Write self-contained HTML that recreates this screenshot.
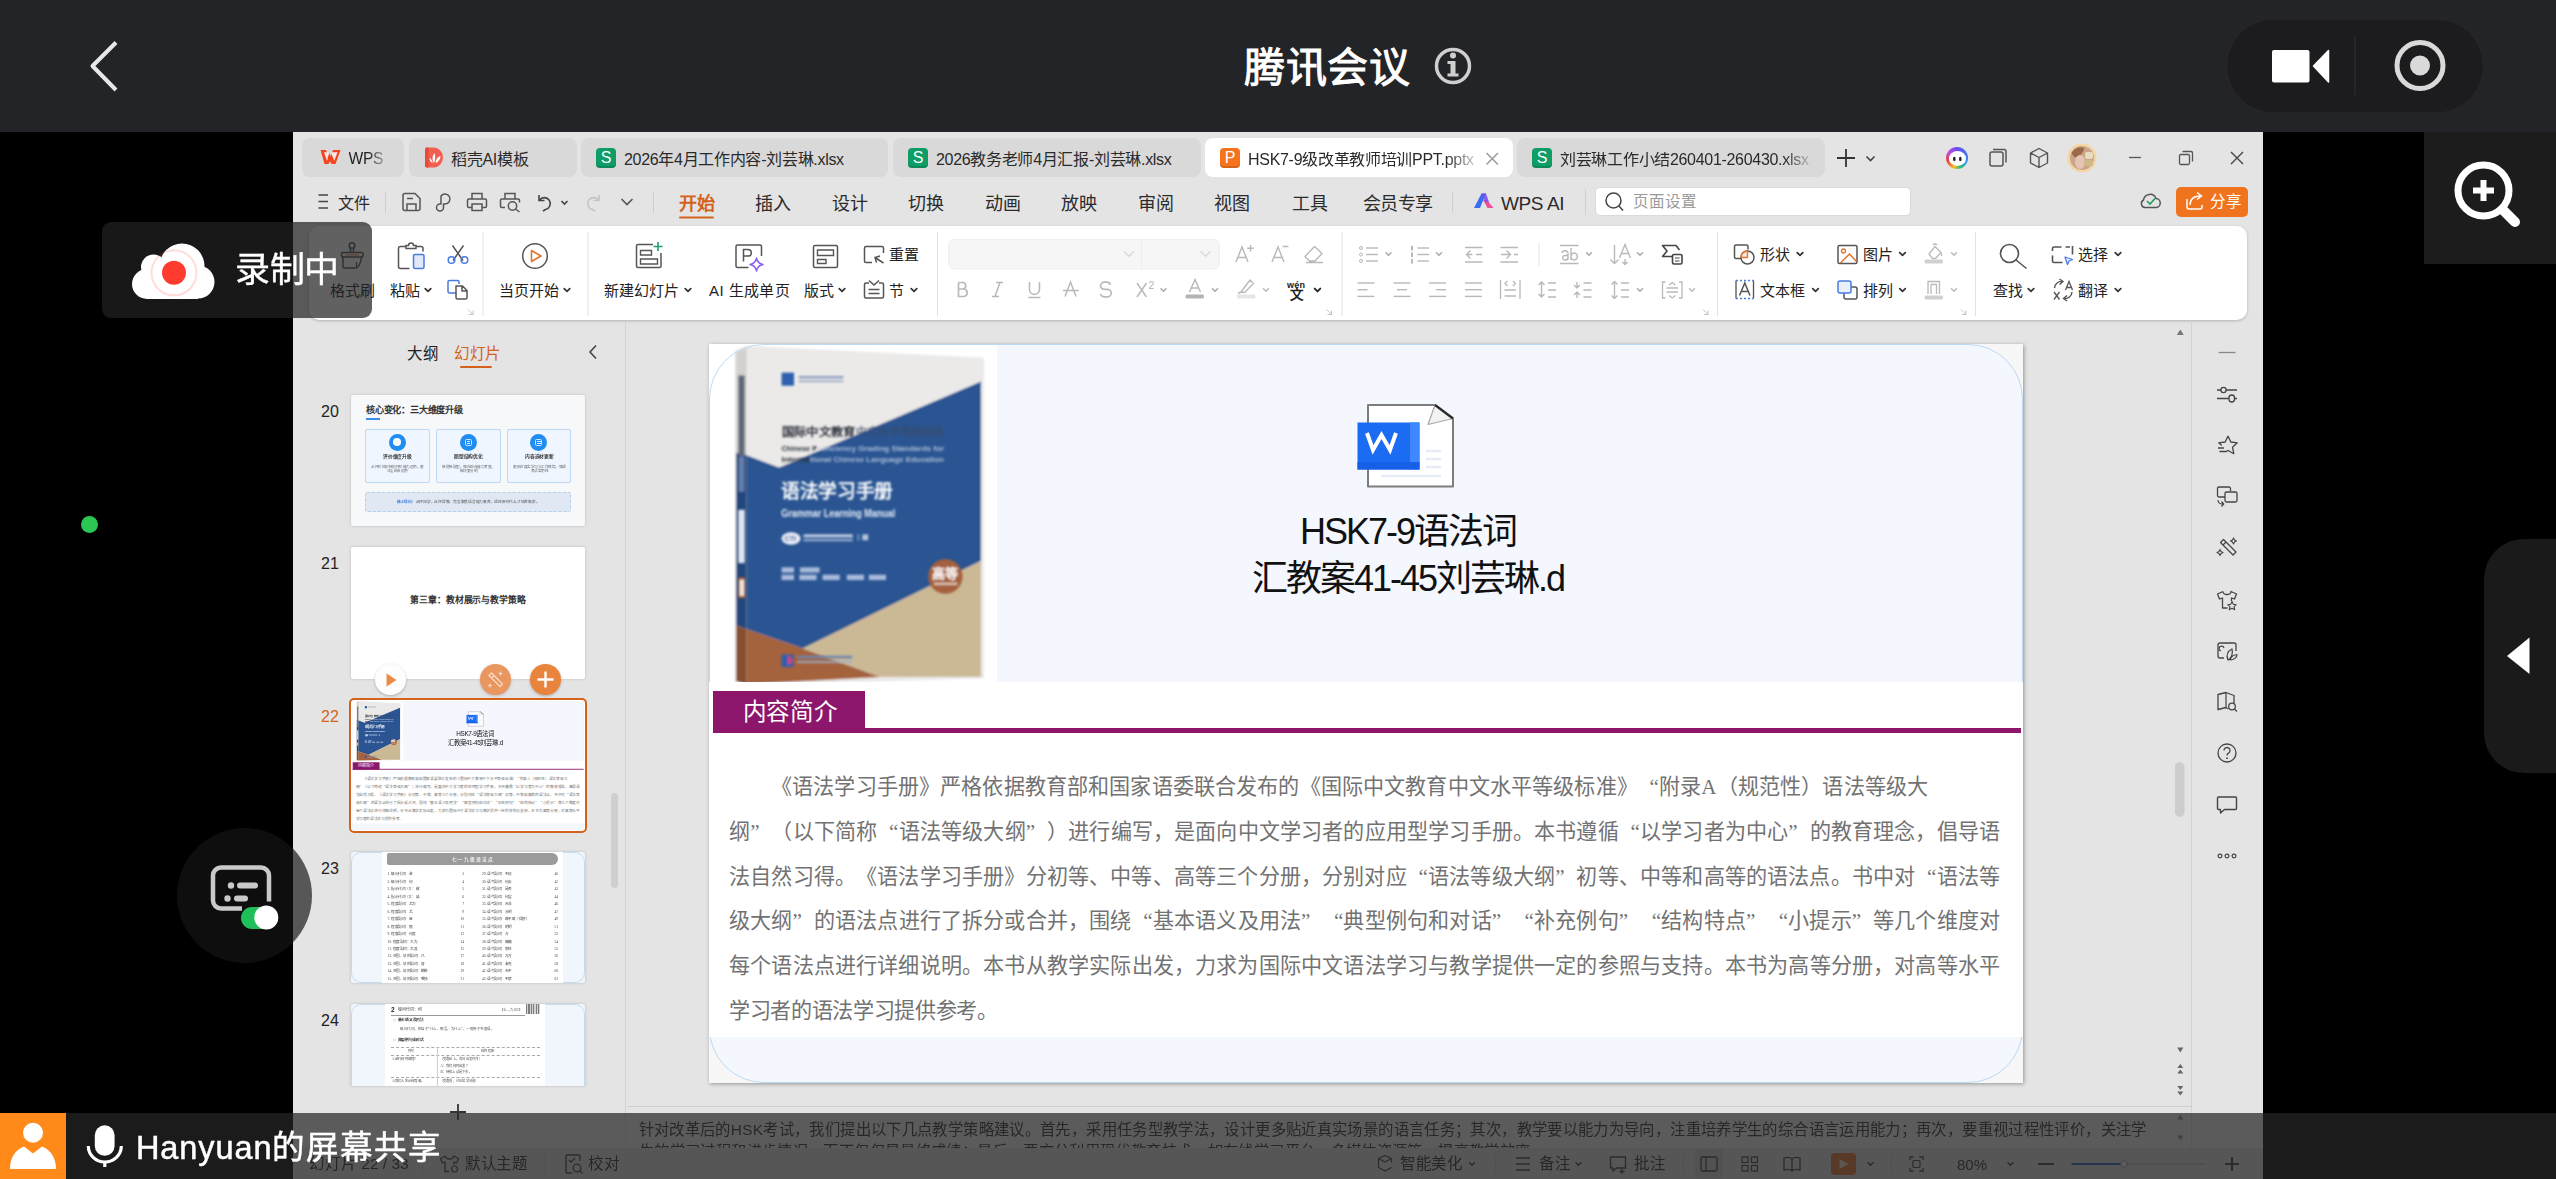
<!DOCTYPE html>
<html lang="zh-CN">
<head>
<meta charset="utf-8">
<title>腾讯会议</title>
<style>
*{box-sizing:border-box;margin:0;padding:0}
html,body{width:2556px;height:1179px;overflow:hidden;background:#000}
body{font-family:"Liberation Sans",sans-serif;position:relative;color:#222}
.abs{position:absolute}
.t{position:absolute;white-space:nowrap;line-height:1}
svg{position:absolute;overflow:visible}
/* top bar */
#topbar{left:0;top:0;width:2556px;height:132px;background:#232427}
/* wps window */
#win{left:293px;top:132px;width:1970px;height:1047px;background:#e4e4e4;overflow:hidden}
.tab{position:absolute;top:6px;height:39px;background:#d9d9d9;border-radius:8px}
.tab .t{top:13.8px;font-size:16px;color:#2a2a2a;letter-spacing:-0.3px}
.ico{position:absolute;top:10px;width:20px;height:20px;border-radius:4px;color:#fff;font-size:16px;font-weight:normal;text-align:center;line-height:19px;box-shadow:inset 0 -2px 0 rgba(0,0,0,.13)}
.menu .t{font-size:18px;color:#2b2b2b;top:62.5px}
.rb .t{font-size:15px;color:#222}
.sep{position:absolute;width:1px;background:#dcdcdc}
.thumb{position:absolute;left:58px;width:234px;background:#fff;box-shadow:0 0 3px rgba(0,0,0,.18);overflow:hidden}
.num{position:absolute;left:28px;font-size:16px;color:#222;line-height:1}
#slide{left:416px;top:212px;width:1314px;height:739px;background:#f7f7f7;box-shadow:1px 1px 4px rgba(0,0,0,.35);overflow:hidden}
.ql{display:inline-block;width:1em;text-align:right;text-align-last:right}.qr{display:inline-block;width:1em;text-align:left;text-align-last:left}
.para.j{text-align:justify;text-align-last:justify;white-space:nowrap;letter-spacing:0}
.para{text-spacing-trim:space-all;position:absolute;left:20px;font-family:"Liberation Serif",serif;font-size:21.1px;color:#727272;white-space:nowrap;line-height:1;letter-spacing:-0.35px}
</style>
</head>
<body>
<!-- ============ TOP BAR ============ -->
<div id="topbar" class="abs">
  <svg width="2556" height="132" viewBox="0 0 2556 132">
    <polyline points="116,42.5 92.500,66 116,90" fill="none" stroke="#e8e8e8" stroke-width="4" stroke-linejoin="round"/>
    <circle cx="1453" cy="66" r="16.5" fill="none" stroke="#cfcfcf" stroke-width="3.5"/>
    <rect x="1450.5" y="61" width="5" height="15" fill="#cfcfcf"/><rect x="1447.5" y="61" width="6" height="3" fill="#cfcfcf"/><rect x="1447.5" y="73.5" width="11" height="3" fill="#cfcfcf"/>
    <circle cx="1453" cy="55.5" r="3" fill="#cfcfcf"/>
    <rect x="2226.500" y="19" width="257" height="94" rx="47" fill="#1c1c1e" stroke="#28282b" stroke-width="1"/>
    <rect x="2272" y="50" width="37.500" height="32.500" rx="2" fill="#fff"/>
    <path d="M2313.500 66 L2328.500 50.500 L2328.500 82 Z" fill="#fff" stroke="#fff" stroke-width="1.500" stroke-linejoin="round"/>
    <rect x="2354.500" y="36" width="1" height="59" fill="#303033"/>
    <circle cx="2420" cy="65.500" r="23" fill="none" stroke="#d9d9d9" stroke-width="5"/>
    <circle cx="2420" cy="65.500" r="10" fill="#d9d9d9"/>
  </svg>
  <div class="t" style="left:1244px;top:47.500px;font-size:41px;color:#fff;font-weight:500;letter-spacing:0.5px;-webkit-text-stroke:1px #fff">腾讯会议</div>
</div>

<!-- ============ WPS WINDOW ============ -->
<div id="win" class="abs">

<!-- tabs -->
<div class="tab" style="left:9px;width:102px"><div class="t" style="left:46.500px;top:13px;font-size:15.600px;color:#222;-webkit-mask-image:linear-gradient(90deg,#000 55%,rgba(0,0,0,.35))">WPS</div></div>
<div class="tab" style="left:116px;width:168px"><div class="t" style="left:42px">稻壳AI模板</div></div>
<div class="tab" style="left:288px;width:307px"><div class="ico" style="left:15px;background:#0e9d67">S</div><div class="t" style="left:43px">2026年4月工作内容-刘芸琳.xlsx</div></div>
<div class="tab" style="left:600px;width:308px"><div class="ico" style="left:15px;background:#0e9d67">S</div><div class="t" style="left:43px">2026教务老师4月汇报-刘芸琳.xlsx</div></div>
<div class="tab" style="left:912px;width:308px;background:#fff"><div class="ico" style="left:15px;background:#f5731d">P</div><div class="t" style="left:43px;width:230px;overflow:hidden;-webkit-mask-image:linear-gradient(90deg,#000 86%,rgba(0,0,0,.15))">HSK7-9级改革教师培训PPT.pptx</div></div>
<div class="tab" style="left:1224px;width:308px"><div class="ico" style="left:15px;background:#0e9d67">S</div><div class="t" style="left:43px;width:249px;overflow:hidden;-webkit-mask-image:linear-gradient(90deg,#000 90%,rgba(0,0,0,.2))">刘芸琳工作小结260401-260430.xlsx</div></div>
<div class="abs" style="left:1653px;top:15px;width:22px;height:22px;border-radius:50%;background:conic-gradient(from 0deg,#6a4cf0,#3a7df0 25%,#2aa5e0 35%,#2fbf71 45%,#f5c023 55%,#f0803c 62%,#e8483c 70%,#c04ae0 85%,#6a4cf0)"></div><div class="abs" style="left:1655.500px;top:19px;width:17.500px;height:15px;border-radius:50%;background:#fff"></div>
<svg width="1970" height="100" viewBox="0 0 1970 100" style="left:0;top:0">
  <!-- wps logo -->
  <path d="M27.500 18 L33 18 L36.500 27 L40 18 L47.500 18 L42.500 32 L38.500 32 L37 28.500 L35.500 32 L31.500 32 Z" fill="#f5441f"/>
  <path d="M31 20.200 L34 28.800 L36.300 23 L35.200 20.200 Z M39 20.200 L44.500 20.200 L41.300 28.800 L38 20.800 Z" fill="#f7e9e4"/><path d="M36.500 21 L38.800 27 L37 31 L34.500 26 Z" fill="#f5441f"/>
  <!-- daoke icon -->
  <path d="M132 17.500 a2 2 0 0 1 2 -2 h7 a9 10 0 0 1 0 20 h-7 a2 2 0 0 1 -2 -2 Z" fill="#f1604f"/>
  <path d="M132 17.500 a2 2 0 0 1 2 -2 h1.500 v20 h-1.500 a2 2 0 0 1 -2 -2 Z" fill="#e8493b"/>
  <path d="M141 31 c-2 -3 -2 -7 0.500 -10 c1 3 1 7 -0.500 10 Z M142.500 31 c0 -3 2 -6 5 -7 c0 3 -2 6 -5 7 Z M139.500 31 c-2 -1 -3 -3 -3 -5 c2 1 3 3 3 5 Z" fill="#fff"/>
  <!-- close x on active tab -->
  <path d="M1193.500 21 L1205 32.500 M1205 21 L1193.500 32.500" stroke="#9a9a9a" stroke-width="1.500" fill="none"/>
  <!-- plus / chevron -->
  <path d="M1544 26 H1562 M1553 17 V35" stroke="#333" stroke-width="1.800" fill="none"/>
  <path d="M1573.500 24.500 L1577.500 28.500 L1581.500 24.500" stroke="#444" stroke-width="1.600" fill="none"/>
  <!-- colorful AI circle -->
  <ellipse cx="1661.300" cy="27" rx="1.300" ry="2.300" fill="#222"/><ellipse cx="1667.300" cy="27" rx="1.300" ry="2.300" fill="#222"/>
  <!-- copy window -->
  <rect x="1697" y="20" width="13" height="14" rx="2" fill="none" stroke="#555" stroke-width="1.500"/>
  <path d="M1700 17.500 h11 a2 2 0 0 1 2 2 v11" fill="none" stroke="#555" stroke-width="1.500"/>
  <!-- cube -->
  <path d="M1746 16.500 L1754.500 21 V31 L1746 35.500 L1737.500 31 V21 Z M1737.500 21 L1746 25.500 L1754.500 21 M1746 25.500 V35.500" fill="none" stroke="#555" stroke-width="1.400" stroke-linejoin="round"/>
  <!-- avatar -->
  <circle cx="1789" cy="26" r="14.500" fill="#f5d5a3"/><circle cx="1789" cy="26" r="12" fill="#c9a58c"/><path d="M1778.500 21 q5 -8 13 -5 q-2 6 -6 9 q-4 2 -7 -4 Z" fill="#9a6a4a"/><ellipse cx="1787" cy="30" rx="5" ry="7" fill="#e6c3b4"/><rect x="1792" y="20" width="8" height="7" rx="2" fill="#e8dcc0"/><rect x="1791" y="28" width="9" height="6" rx="2" fill="#cdb98a"/>
  <!-- min / restore / close -->
  <path d="M1836 25.500 H1848" stroke="#555" stroke-width="1.300"/>
  <rect x="1886.500" y="22.500" width="10" height="10" rx="1.500" fill="none" stroke="#555" stroke-width="1.300"/>
  <path d="M1889.500 19.500 h8.500 a1.500 1.500 0 0 1 1.500 1.500 v8.500" fill="none" stroke="#555" stroke-width="1.300"/>
  <path d="M1938 20 L1950 32 M1950 20 L1938 32" stroke="#444" stroke-width="1.400"/>
  <!-- MENU ROW icons -->
  <path d="M25.500 63 H35 M25.500 69.500 H35 M25.500 76 H35" stroke="#444" stroke-width="1.500"/>
  <rect x="92" y="60" width="1" height="21" fill="#cfcfcf"/>
  <!-- save -->
  <path d="M112 61.500 h10 l5 5 v10 a2 2 0 0 1 -2 2 h-13 a2 2 0 0 1 -2 -2 v-13 a2 2 0 0 1 2 -2 Z" fill="none" stroke="#555" stroke-width="1.500"/>
  <path d="M114 66.500 h6 M114 78 v-6 h9 v6" fill="none" stroke="#555" stroke-width="1.500"/>
  <!-- export/p icon -->
  <path d="M152 72 a5 5 0 1 0 -4 -8 v8 h-1 a3.500 3.500 0 1 0 3.500 3.500 v-3.500 Z" fill="none" stroke="#555" stroke-width="1.500" stroke-linejoin="round"/>
  <!-- print -->
  <path d="M179 67 v-5.500 h10 v5.500 M179 75.500 h-3 a1.500 1.500 0 0 1 -1.500 -1.500 v-5.500 a1.500 1.500 0 0 1 1.500 -1.500 h16 a1.500 1.500 0 0 1 1.500 1.500 v5.500 a1.500 1.500 0 0 1 -1.500 1.500 h-3 M179 72 h10 v6.500 h-10 Z" fill="none" stroke="#555" stroke-width="1.500"/>
  <!-- preview -->
  <path d="M212 67 v-5.500 h10 v5.500 M212 75.500 h-3 a1.500 1.500 0 0 1 -1.500 -1.500 v-5.500 a1.500 1.500 0 0 1 1.500 -1.500 h16 a1.500 1.500 0 0 1 1.500 1.500 v2" fill="none" stroke="#555" stroke-width="1.500"/>
  <circle cx="219.500" cy="74" r="4.200" fill="none" stroke="#555" stroke-width="1.500"/><path d="M222.500 77 L226.500 80" stroke="#555" stroke-width="1.500"/>
  <!-- undo -->
  <path d="M246 63 v5.500 h5.500 M246.500 68 a6 6 0 1 1 6 9.500 l-2.500 1.500" fill="none" stroke="#444" stroke-width="1.600"/>
  <path d="M268.500 69 L271.500 72 L274.500 69" stroke="#444" stroke-width="1.600" fill="none"/>
  <!-- redo (disabled) -->
  <path d="M306 63 v5.500 h-5.500 M305.500 68 a6 6 0 1 0 -6 9.500 l2.500 1.500" fill="none" stroke="#c4c4c4" stroke-width="1.600"/>
  <path d="M328.500 67 L334 72.500 L339.500 67" stroke="#555" stroke-width="1.600" fill="none"/>
  <rect x="360" y="60" width="1" height="21" fill="#cfcfcf"/>
  <rect x="386" y="84.500" width="35" height="2" rx="1" fill="#d4621a"/>
  <rect x="1159" y="60" width="1" height="21" fill="#cfcfcf"/>
  <rect x="1292" y="57" width="1" height="26" fill="#cfcfcf"/>
  <!-- wps ai logo -->
  <path d="M1181 76 L1188.500 61.500 L1193 61.500 L1187 76 Z" fill="#3a6df0"/>
  <path d="M1190 68 L1194 68 L1200.500 76 L1194.500 76 Z" fill="#f0509a"/>
  <path d="M1188.500 61.500 L1193 61.500 L1196 70 L1192 70 Z" fill="#7a4cf0" opacity=".85"/>
</svg>


<!-- menu -->
<div class="menu">
<div class="t" style="left:45px;top:64px;font-size:16px">文件</div>
<div class="t" style="left:386px;top:63px;font-weight:bold;color:#d4621a;letter-spacing:-0.5px">开始</div>
<div class="t" style="left:462px">插入</div>
<div class="t" style="left:539px">设计</div>
<div class="t" style="left:615px">切换</div>
<div class="t" style="left:692px">动画</div>
<div class="t" style="left:768px">放映</div>
<div class="t" style="left:845px">审阅</div>
<div class="t" style="left:921px">视图</div>
<div class="t" style="left:999px">工具</div>
<div class="t" style="left:1070px;letter-spacing:-0.6px">会员专享</div>
<div class="t" style="left:1208px;top:61.500px;font-size:19px;letter-spacing:-0.4px">WPS AI</div>
</div>
<div class="abs" style="left:1302px;top:55px;width:316px;height:29px;background:#fff;border-radius:5px;border:1px solid #dadada"></div>
<svg width="40" height="30" style="left:1305px;top:55px"><circle cx="15.500" cy="13.500" r="7.500" fill="none" stroke="#444" stroke-width="1.500"/><path d="M21 19 L25 23.500" stroke="#444" stroke-width="1.500"/></svg>
<div class="t" style="left:1340px;top:62px;font-size:15.500px;color:#9a9a9a">页面设置</div>
<svg width="30" height="30" style="left:1843px;top:56px"><path d="M9 19.500 h10.500 a4.500 4.500 0 0 0 0.500 -9 a6.500 6.500 0 0 0 -12.500 1.500 a4 4 0 0 0 1.500 7.500 Z" fill="none" stroke="#555" stroke-width="1.500"/><path d="M11 13 L14 16 L19 10.500" fill="none" stroke="#1f9d5a" stroke-width="1.600"/></svg>
<div class="abs" style="left:1883px;top:54.500px;width:72px;height:30px;background:#f0731e;border-radius:5px"></div>
<svg width="30" height="30" style="left:1888px;top:56px"><path d="M6 11 v8 a2 2 0 0 0 2 2 h11 a2 2 0 0 0 2 -2 v-2" fill="none" stroke="#fff" stroke-width="1.500"/><path d="M9 17 c0 -6 4 -9 11 -9 M16 4.500 L20.500 8 L16 11.500" fill="none" stroke="#fff" stroke-width="1.500"/></svg>
<div class="t" style="left:1917px;top:62px;font-size:15.500px;color:#fff">分享</div>


<!-- ribbon -->
<div class="abs" style="left:16px;top:94px;width:1938px;height:94px;background:#fff;border-radius:10px;box-shadow:0 1px 3px rgba(0,0,0,.22)"></div>
<svg width="1970" height="200" viewBox="0 0 1970 200" style="left:0;top:0"><rect x="189.5" y="100" width="1" height="84" fill="#e2e2e2"/><rect x="294.5" y="100" width="1" height="84" fill="#e2e2e2"/><rect x="644.0" y="100" width="1" height="84" fill="#e2e2e2"/><rect x="1048.5" y="100" width="1" height="84" fill="#e2e2e2"/><rect x="1424.0" y="100" width="1" height="84" fill="#e2e2e2"/><rect x="1682.0" y="100" width="1" height="84" fill="#e2e2e2"/><rect x="1245.5" y="111" width="1" height="23" fill="#e2e2e2"/><circle cx="59" cy="113.500" r="2.800" fill="none" stroke="#555" stroke-width="1.500"/><path d="M57.500 116 V120.500 M60.500 116 V120.500" stroke="#555" stroke-width="1.500"/><rect x="48.500" y="120.500" width="21.500" height="4.500" rx="1.500" fill="none" stroke="#555" stroke-width="1.500"/><path d="M52.500 123 H66" stroke="#d9844a" stroke-width="1"/><path d="M50 125 V134.500 a1.500 1.500 0 0 0 1.500 1.500 H62 c3.500 0 6 -5 6.500 -11" fill="none" stroke="#555" stroke-width="1.500"/><path d="M63.500 130 v5" stroke="#555" stroke-width="1.200"/><path d="M113 114.500 h-5.500 a2 2 0 0 0 -2 2 v18 a2 2 0 0 0 2 2 h9 M123 114.500 h5 a2 2 0 0 1 2 2 v3" fill="none" stroke="#555" stroke-width="1.500"/><path d="M113 116.500 v-3 h2.500 a2.500 2.500 0 0 1 5 0 h2.500 v3 Z" fill="none" stroke="#555" stroke-width="1.500"/><rect x="120.500" y="122.500" width="10.500" height="14" rx="1.500" fill="#dfe9fb" stroke="#4a7be0" stroke-width="1.500"/><path d="M132.2 156.6 L135 159.4 L137.8 156.6" stroke="#333" stroke-width="1.7" fill="none" stroke-linecap="round" stroke-linejoin="round"/><path d="M159.500 113.500 L170 128.500 M170.500 113.500 L160 128.500" stroke="#555" stroke-width="1.500" fill="none"/><circle cx="158.500" cy="128" r="3.300" fill="none" stroke="#4a7be0" stroke-width="1.500"/><circle cx="171.500" cy="128" r="3.300" fill="none" stroke="#4a7be0" stroke-width="1.500"/><path d="M163 161 h-6.500 a1.500 1.500 0 0 1 -1.500 -1.500 v-9.500 a1.500 1.500 0 0 1 1.500 -1.500 h8 a1.500 1.500 0 0 1 1.500 1.500 v2" fill="none" stroke="#4a7be0" stroke-width="1.500"/><path d="M163 154 h6.500 l4.500 4.500 v7 a1.500 1.500 0 0 1 -1.500 1.500 h-8 a1.500 1.500 0 0 1 -1.500 -1.500 Z M169 154 v5 h5" fill="#fff" stroke="#555" stroke-width="1.500" stroke-linejoin="round"/><path d="M175.0 177.5 L180.0 182.5 M180.0 178.5 V182.5 H176.0" stroke="#c4c4c4" stroke-width="1" fill="none"/><circle cx="242" cy="124" r="12.300" fill="none" stroke="#555" stroke-width="1.500"/><path d="M238.500 118.500 L248 124 L238.500 129.500 Z" fill="none" stroke="#e0742e" stroke-width="1.600" stroke-linejoin="round"/><path d="M271.2 156.6 L274 159.4 L276.8 156.6" stroke="#333" stroke-width="1.7" fill="none" stroke-linecap="round" stroke-linejoin="round"/><path d="M360 112.500 h-15 a1.500 1.500 0 0 0 -1.500 1.500 v20 a1.500 1.500 0 0 0 1.500 1.500 h21.500 a1.500 1.500 0 0 0 1.500 -1.500 v-13" fill="none" stroke="#555" stroke-width="1.500"/><path d="M347.500 118.500 h11 v4.500 h-11 Z M347.500 127 h17 v5 h-17 Z" fill="none" stroke="#555" stroke-width="1.400"/><path d="M365 110 v9 M360.500 114.500 h9" stroke="#1f9d6b" stroke-width="1.600"/><path d="M392.2 156.6 L395 159.4 L397.8 156.6" stroke="#333" stroke-width="1.7" fill="none" stroke-linecap="round" stroke-linejoin="round"/><path d="M468.500 124 v-9.500 a1.500 1.500 0 0 0 -1.500 -1.500 h-22.500 a1.500 1.500 0 0 0 -1.500 1.500 v19.500 a1.500 1.500 0 0 0 1.500 1.500 h11" fill="none" stroke="#555" stroke-width="1.500"/><path d="M450.500 129.500 v-12 h4.500 a3.300 3.300 0 0 1 0 6.600 h-4.500" fill="none" stroke="#555" stroke-width="1.500"/><path d="M463.500 126 q1 5.500 6.500 6.500 q-5.500 1 -6.500 6.500 q-1 -5.500 -6.500 -6.500 q5.500 -1 6.500 -6.500 Z" fill="#fff" stroke="#8a5cf0" stroke-width="1.400" stroke-linejoin="round"/><rect x="520.500" y="113.500" width="24" height="22" rx="1.500" fill="none" stroke="#555" stroke-width="1.500"/><path d="M524.500 118 h16 v5.500 h-16 Z M524.500 127.500 h8.500 v4 h-8.500 Z" fill="none" stroke="#555" stroke-width="1.400"/><path d="M546.2 156.6 L549 159.4 L551.8 156.6" stroke="#333" stroke-width="1.7" fill="none" stroke-linecap="round" stroke-linejoin="round"/><path d="M579 130.500 h-6 a1.500 1.500 0 0 1 -1.500 -1.500 v-13 a1.500 1.500 0 0 1 1.500 -1.500 h16 a1.500 1.500 0 0 1 1.500 1.500 v5" fill="none" stroke="#555" stroke-width="1.500"/><path d="M590.500 131 L582 125.500 M587 124 L582 125.500 L583.500 130.500" fill="none" stroke="#555" stroke-width="1.500"/><path d="M576 151 h-3 a1.500 1.500 0 0 0 -1.500 1.500 v12 a1.500 1.500 0 0 0 1.500 1.500 h16 a1.500 1.500 0 0 0 1.500 -1.500 v-12 a1.500 1.500 0 0 0 -1.500 -1.500 h-3 M576 148.500 L581 153 L586 148.500 M575.500 157.500 h11 M575.500 161.500 h11" fill="none" stroke="#555" stroke-width="1.500"/><path d="M618.2 156.6 L621 159.4 L623.8 156.6" stroke="#333" stroke-width="1.7" fill="none" stroke-linecap="round" stroke-linejoin="round"/><rect x="655.500" y="107.500" width="271" height="29.500" rx="6" fill="#f6f6f6" stroke="#efefef" stroke-width="1"/><rect x="848" y="108" width="1" height="28.500" fill="#ececec"/><path d="M831.5 119.75 L836 124.25 L840.5 119.75" stroke="#d9d9d9" stroke-width="1.4" fill="none" stroke-linecap="round" stroke-linejoin="round"/><path d="M908.0 119.75 L912.5 124.25 L917.0 119.75" stroke="#d9d9d9" stroke-width="1.4" fill="none" stroke-linecap="round" stroke-linejoin="round"/><path d="M943 130 L949 115 L955 130 M945 125.500 h8 M957.500 113 v6.500 M954.200 116.200 h6.600" fill="none" stroke="#b9b9b9" stroke-width="1.400"/><path d="M979 130 L985 115 L991 130 M981 125.500 h8 M989.500 114.500 h6" fill="none" stroke="#b9b9b9" stroke-width="1.400"/><path d="M1012 124.500 L1021.500 114.500 L1029 121.500 L1022 129 h-5.500 Z M1013 130.500 h17" fill="none" stroke="#b9b9b9" stroke-width="1.400" stroke-linejoin="round"/><path d="M665.500 150.500 v14 h5.500 a3.800 3.800 0 0 0 0 -7.500 h-5.500 M665.500 157 h4.500 a3.300 3.300 0 0 0 0 -6.500 h-4.500" fill="none" stroke="#b9b9b9" stroke-width="1.700"/><path d="M703 150.500 h7 M699 164.500 h7 M707 150.500 L702 164.500" fill="none" stroke="#b9b9b9" stroke-width="1.500"/><path d="M736.500 150 v7.500 a5 5 0 0 0 10 0 v-7.500 M735.500 165.500 h12" fill="none" stroke="#b9b9b9" stroke-width="1.500"/><path d="M772 164.500 L777.500 150 L783 164.500 M770 158.500 h15.500" fill="none" stroke="#b9b9b9" stroke-width="1.500"/><path d="M817.500 153 a4.500 3.300 0 0 0 -4.500 -2.800 h-1.500 a3.800 3.500 0 0 0 0 7.200 h3 a3.800 3.700 0 0 1 0 7.400 h-2 a4.800 3.500 0 0 1 -5 -3" fill="none" stroke="#b9b9b9" stroke-width="1.700"/><path d="M844 151 L853.500 165 M853.500 151 L844 165" stroke="#b9b9b9" stroke-width="1.500" fill="none"/><path d="M856.500 151.500 a2 2 0 0 1 4 0 c0 1.500 -4 3 -4 5 h4.200" stroke="#b9b9b9" stroke-width="1.100" fill="none"/><path d="M868.0 156.75 L870.5 159.25 L873.0 156.75" stroke="#aaa" stroke-width="1.5" fill="none" stroke-linecap="round" stroke-linejoin="round"/><path d="M896.500 160 L902 147.500 L907.500 160 M898.500 156 h7" fill="none" stroke="#b9b9b9" stroke-width="1.500"/><rect x="892.500" y="162.500" width="18.500" height="4" rx="1.500" fill="#b4b4b4"/><path d="M919.5 156.75 L922 159.25 L924.5 156.75" stroke="#aaa" stroke-width="1.5" fill="none" stroke-linecap="round" stroke-linejoin="round"/><path d="M948 160 L957 148 L960.500 151.500 L951.500 160.500 Z M945 161.500 l3 -1.500" fill="none" stroke="#b9b9b9" stroke-width="1.400" stroke-linejoin="round"/><rect x="944" y="162.500" width="18.500" height="4" rx="1.500" fill="#e6e6e6"/><path d="M970.5 156.75 L973 159.25 L975.5 156.75" stroke="#bbb" stroke-width="1.5" fill="none" stroke-linecap="round" stroke-linejoin="round"/><path d="M1021.7 156.6 L1024.5 159.4 L1027.3 156.6" stroke="#222" stroke-width="1.9" fill="none" stroke-linecap="round" stroke-linejoin="round"/><path d="M1033.5 177.5 L1038.5 182.5 M1038.5 178.5 V182.5 H1034.5" stroke="#c4c4c4" stroke-width="1" fill="none"/><circle cx="1068" cy="116" r="1.500" fill="none" stroke="#b9b9b9" stroke-width="1"/><path d="M1073 116 h12" stroke="#b9b9b9" stroke-width="1.400"/><path d="M1124.500 116 h11.500" stroke="#b9b9b9" stroke-width="1.400"/><rect x="1118" y="114" width="2" height="4.500" fill="#b9b9b9"/><circle cx="1068" cy="122.5" r="1.500" fill="none" stroke="#b9b9b9" stroke-width="1"/><path d="M1073 122.5 h12" stroke="#b9b9b9" stroke-width="1.400"/><path d="M1124.500 122.5 h11.500" stroke="#b9b9b9" stroke-width="1.400"/><rect x="1118" y="120.5" width="2" height="4.500" fill="#b9b9b9"/><circle cx="1068" cy="129" r="1.500" fill="none" stroke="#b9b9b9" stroke-width="1"/><path d="M1073 129 h12" stroke="#b9b9b9" stroke-width="1.400"/><path d="M1124.500 129 h11.500" stroke="#b9b9b9" stroke-width="1.400"/><rect x="1118" y="127" width="2" height="4.500" fill="#b9b9b9"/><path d="M1093.0 120.75 L1095.5 123.25 L1098.0 120.75" stroke="#aaa" stroke-width="1.5" fill="none" stroke-linecap="round" stroke-linejoin="round"/><path d="M1143.5 120.75 L1146 123.25 L1148.5 120.75" stroke="#aaa" stroke-width="1.5" fill="none" stroke-linecap="round" stroke-linejoin="round"/><path d="M1172 115.500 h17.500 M1172 130 h17.500 M1173.500 122.500 h6 M1183 122.500 h6 M1177.500 118.500 L1173.500 122.500 L1177.500 126.500" fill="none" stroke="#b9b9b9" stroke-width="1.400"/><path d="M1207.500 115.500 h17.500 M1207.500 130 h17.500 M1208 122.500 h9.500 M1221 122.500 h4 M1213.500 118.500 L1217.500 122.500 L1213.500 126.500" fill="none" stroke="#b9b9b9" stroke-width="1.400"/><path d="M1267 113.500 h18.500 M1267 131.500 h18.500" stroke="#b9b9b9" stroke-width="1.300"/><path d="M1275 127.500 v-6 a3 2.500 0 0 0 -6 -0.500 M1275 123.500 h-3.500 a2.300 2.300 0 0 0 0 4.500 h1 a2.500 2.500 0 0 0 2.500 -2.500 M1278 116 v12 M1278 124 a3.200 3.500 0 1 1 0 1" fill="none" stroke="#b9b9b9" stroke-width="1.400"/><path d="M1293.5 120.75 L1296 123.25 L1298.5 120.75" stroke="#aaa" stroke-width="1.5" fill="none" stroke-linecap="round" stroke-linejoin="round"/><path d="M1321.500 113 v18.500 M1317.500 127.500 L1321.500 131.500 L1325.500 127.500 M1326.500 126 L1332 112.500 L1337.500 126 M1328.500 121.500 h7 M1332 127 v5 M1329.500 130 L1332 132.500 L1334.500 130" fill="none" stroke="#b9b9b9" stroke-width="1.400"/><path d="M1344.5 120.75 L1347 123.25 L1349.5 120.75" stroke="#aaa" stroke-width="1.5" fill="none" stroke-linecap="round" stroke-linejoin="round"/><path d="M1379 124.500 h-9.500 l4.500 -5.500 l-4.500 -5.500 h13.500 l3.500 4.500" fill="none" stroke="#444" stroke-width="1.600" stroke-linejoin="round"/><rect x="1379.500" y="122.500" width="9.500" height="9.500" rx="1.500" fill="#fff" stroke="#444" stroke-width="1.600"/><path d="M1382 126 h4.500 M1382 129 h4.500" stroke="#444" stroke-width="1.200"/><path d="M1064.5 151.0 h17" stroke="#b9b9b9" stroke-width="1.400"/><path d="M1064.5 157.7 h10" stroke="#b9b9b9" stroke-width="1.400"/><path d="M1064.5 164.4 h17" stroke="#b9b9b9" stroke-width="1.400"/><path d="M1100.5 151.0 h17" stroke="#b9b9b9" stroke-width="1.400"/><path d="M1104.0 157.7 h10" stroke="#b9b9b9" stroke-width="1.400"/><path d="M1100.5 164.4 h17" stroke="#b9b9b9" stroke-width="1.400"/><path d="M1136 151.0 h17" stroke="#b9b9b9" stroke-width="1.400"/><path d="M1143 157.7 h10" stroke="#b9b9b9" stroke-width="1.400"/><path d="M1136 164.4 h17" stroke="#b9b9b9" stroke-width="1.400"/><path d="M1172 151.0 h17" stroke="#b9b9b9" stroke-width="1.400"/><path d="M1172 157.7 h17" stroke="#b9b9b9" stroke-width="1.400"/><path d="M1172 164.4 h17" stroke="#b9b9b9" stroke-width="1.400"/><path d="M1207.500 148 v19 M1227 148 v19 M1211.500 158 h11.500 M1211.500 164 h11.500 M1214.500 149 l-2.500 2.500 l2.500 2.500 M1220 149 l2.500 2.500 l-2.500 2.500" fill="none" stroke="#b9b9b9" stroke-width="1.300"/><path d="M1248.500 150 v15 M1245.500 153 L1248.500 150 L1251.500 153 M1245.500 162 L1248.500 165 L1251.500 162 M1255 151 h8 M1255 158 h8 M1255 165 h8" fill="none" stroke="#b9b9b9" stroke-width="1.400"/><path d="M1284 150 v6 M1281 153 L1284 156 L1287 153 M1284 166 v-6 M1281 163 L1284 160 L1287 163 M1290.500 151 h8 M1290.500 158 h8 M1290.500 165 h8" fill="none" stroke="#b9b9b9" stroke-width="1.400"/><path d="M1321.500 149.500 v17 M1318.500 152.500 L1321.500 149.500 L1324.500 152.500 M1318.500 163.500 L1321.500 166.500 L1324.500 163.500 M1328 151 h8 M1328 158 h8 M1328 165 h8" fill="none" stroke="#b9b9b9" stroke-width="1.400"/><path d="M1344.5 156.75 L1347 159.25 L1349.5 156.75" stroke="#aaa" stroke-width="1.5" fill="none" stroke-linecap="round" stroke-linejoin="round"/><path d="M1372.500 150 h-3 v16 h3 M1386 150 h3 v16 h-3 M1373.500 156 h11.500 M1373.500 160 h11.500 M1376 153 l3.200 -2.500 l3.200 2.500 M1376 163.500 l3.200 2.500 l3.200 -2.500" fill="none" stroke="#b9b9b9" stroke-width="1.300"/><path d="M1396.5 156.75 L1399 159.25 L1401.5 156.75" stroke="#bbb" stroke-width="1.5" fill="none" stroke-linecap="round" stroke-linejoin="round"/><path d="M1410.0 177.5 L1415.0 182.5 M1415.0 178.5 V182.5 H1411.0" stroke="#c4c4c4" stroke-width="1" fill="none"/><path d="M1449 126.500 h-6 a1.500 1.500 0 0 1 -1.500 -1.500 v-10.500 a1.500 1.500 0 0 1 1.500 -1.500 h10.500 a1.500 1.500 0 0 1 1.500 1.500 v3" fill="none" stroke="#555" stroke-width="1.500"/><circle cx="1454.500" cy="125.500" r="6.500" fill="#fff" stroke="#555" stroke-width="1.500"/><path d="M1454.500 125.500 v-6.500 a6.500 6.500 0 0 0 -6.500 6.500 Z" fill="#fbe6d8" stroke="#e0742e" stroke-width="1.400" stroke-linejoin="round"/><path d="M1504.2 120.6 L1507 123.4 L1509.8 120.6" stroke="#333" stroke-width="1.7" fill="none" stroke-linecap="round" stroke-linejoin="round"/><path d="M1443 148.500 v18 M1460.500 148.500 v18" stroke="#555" stroke-width="1.300"/><path d="M1443 148.500 h17.500 M1443 166.500 h17.500" stroke="#4a7be0" stroke-width="1.300" stroke-dasharray="2 2"/><path d="M1446.500 163.500 L1451.800 151 L1457 163.500 M1448.500 159.500 h6.500" fill="none" stroke="#555" stroke-width="1.500"/><path d="M1519.7 156.6 L1522.5 159.4 L1525.3 156.6" stroke="#333" stroke-width="1.7" fill="none" stroke-linecap="round" stroke-linejoin="round"/><rect x="1545" y="113.500" width="19" height="18" rx="1.500" fill="none" stroke="#555" stroke-width="1.500"/><circle cx="1550.500" cy="119" r="2" fill="none" stroke="#e0742e" stroke-width="1.300"/><path d="M1547.500 131 L1556.500 122 L1563.500 129.500" fill="none" stroke="#e0742e" stroke-width="1.500"/><path d="M1606.7 120.6 L1609.5 123.4 L1612.3 120.6" stroke="#333" stroke-width="1.7" fill="none" stroke-linecap="round" stroke-linejoin="round"/><rect x="1551" y="155" width="13" height="12" rx="2" fill="#fff" stroke="#555" stroke-width="1.500"/><rect x="1545" y="149" width="13" height="12" rx="2" fill="#eaf0fd" stroke="#4a7be0" stroke-width="1.500"/><path d="M1551 161 v-0 " stroke="#555"/><path d="M1606.7 156.6 L1609.5 159.4 L1612.3 156.6" stroke="#333" stroke-width="1.7" fill="none" stroke-linecap="round" stroke-linejoin="round"/><path d="M1636 122 L1642 114.500 L1648 120.500 L1642.500 126.500 h-3 Z M1640 113 a2.500 2.500 0 0 1 4 0 M1648.500 121 v3" fill="none" stroke="#b9b9b9" stroke-width="1.300" stroke-linejoin="round"/><rect x="1631.500" y="127.500" width="18.500" height="4" rx="1.500" fill="#d0d0d0"/><path d="M1658.5 120.75 L1661 123.25 L1663.5 120.75" stroke="#bbb" stroke-width="1.5" fill="none" stroke-linecap="round" stroke-linejoin="round"/><path d="M1635 162 v-12.500 h11.500 v12.500 M1638 162 v-9.500 h5.500 v9.500" fill="none" stroke="#b9b9b9" stroke-width="1.300"/><rect x="1631.500" y="163.500" width="18.500" height="4" rx="1.500" fill="#d0d0d0"/><path d="M1658.5 156.75 L1661 159.25 L1663.5 156.75" stroke="#bbb" stroke-width="1.5" fill="none" stroke-linecap="round" stroke-linejoin="round"/><path d="M1668.0 177.5 L1673.0 182.5 M1673.0 178.5 V182.5 H1669.0" stroke="#c4c4c4" stroke-width="1" fill="none"/><circle cx="1716.500" cy="121.500" r="9" fill="none" stroke="#555" stroke-width="1.600"/><path d="M1723 128 L1733.500 136.500" stroke="#555" stroke-width="1.600"/><path d="M1735.2 156.6 L1738 159.4 L1740.8 156.6" stroke="#333" stroke-width="1.7" fill="none" stroke-linecap="round" stroke-linejoin="round"/><path d="M1768.500 115 h-7.500 a1.500 1.500 0 0 0 -1.500 1.500 v2.500 M1772.500 115 h4.500 M1759.500 123.500 v5.500 a1.500 1.500 0 0 0 1.500 1.500 h8.500 M1779.500 114 v8.500" fill="none" stroke="#555" stroke-width="1.600"/><path d="M1772 125 L1779.500 127.500 L1776 129 L1774.500 132.500 Z" fill="#eaf0fd" stroke="#4a7be0" stroke-width="1.300" stroke-linejoin="round"/><path d="M1822.2 120.6 L1825 123.4 L1827.8 120.6" stroke="#333" stroke-width="1.7" fill="none" stroke-linecap="round" stroke-linejoin="round"/><path d="M1761.500 156 a7 7 0 0 1 8 -6.500 M1766.500 147 L1770 149.500 L1766.500 152.500 M1779 160 a7 7 0 0 1 -8 6.500 M1774 169 L1770.500 166.500 L1774 163.500" fill="none" stroke="#555" stroke-width="1.400"/><path d="M1772.500 158 L1776 149.500 L1779.500 158 M1773.800 155.500 h4.500 M1761 160 L1766.500 167.500 M1766.500 160 L1761 167.500" fill="none" stroke="#555" stroke-width="1.300"/><path d="M1822.2 156.6 L1825 159.4 L1827.8 156.6" stroke="#333" stroke-width="1.7" fill="none" stroke-linecap="round" stroke-linejoin="round"/></svg>
<div class="rb"><div class="t" style="left:37px;top:151px">格式刷</div><div class="t" style="left:97px;top:151px">粘贴</div><div class="t" style="left:206px;top:151px">当页开始</div><div class="t" style="left:311px;top:151px">新建幻灯片</div><div class="t" style="left:416px;top:151px;letter-spacing:0.4px">AI 生成单页</div><div class="t" style="left:511px;top:151px">版式</div><div class="t" style="left:596px;top:115px">重置</div><div class="t" style="left:596px;top:151px">节</div><div class="t" style="left:1467px;top:115px">形状</div><div class="t" style="left:1467px;top:151px">文本框</div><div class="t" style="left:1570px;top:115px">图片</div><div class="t" style="left:1570px;top:151px">排列</div><div class="t" style="left:1699.5px;top:151px">查找</div><div class="t" style="left:1785px;top:115px">选择</div><div class="t" style="left:1785px;top:151px">翻译</div><div class="t" style="left:994px;top:149px;font-size:9px;color:#222;font-weight:bold;letter-spacing:0.3px">wén</div><div class="t" style="left:997px;top:156px;font-size:13.500px;color:#222;font-weight:bold">文</div></div>


<!-- left panel -->
<div class="t" style="left:114px;top:213.500px;font-size:15.500px;color:#222">大纲</div>
<div class="t" style="left:161px;top:213.500px;font-size:15.500px;color:#d4621a;letter-spacing:-0.3px">幻灯片</div>
<div class="abs" style="left:167px;top:234px;width:32px;height:2px;background:#d4621a;border-radius:1px"></div>
<svg width="20" height="20" style="left:290px;top:210px"><path d="M13 3.500 L7 10 L13 16.500" fill="none" stroke="#444" stroke-width="1.600"/></svg>
<div class="num" style="top:271.6px;color:#222">20</div>
<div class="num" style="top:423.6px;color:#222">21</div>
<div class="num" style="top:576.6px;color:#d4621a">22</div>
<div class="num" style="top:728.6px;color:#222">23</div>
<div class="num" style="top:880.6px;color:#222">24</div>
<div class="thumb" style="top:263px;height:131px;background:#f7f8fa;border-radius:2px"><div class="t" style="left:15px;top:11px;font-size:9.200px;font-weight:bold;color:#333;letter-spacing:-0.2px">核心变化：三大维度升级</div><div class="abs" style="left:15px;top:23px;width:14px;height:1.500px;background:#3a8ee6"></div><div class="abs" style="left:14px;top:34px;width:64.500px;height:54px;background:#eff6ff;border:1px solid #bdd9f6;border-radius:2px"></div><div class="abs" style="left:37.75px;top:38.500px;width:17px;height:17px;border-radius:50%;background:#1f8df2"></div><div class="abs" style="left:42.25px;top:43px;width:8px;height:8px;border-radius:50%;background:#fff"></div><div class="abs" style="left:14px;top:57px;width:258px;height:120px;transform:scale(.25);transform-origin:0 0"><div class="t" style="left:0;width:258px;text-align:center;top:8px;font-size:19px;font-weight:bold;color:#333">评价维度升级</div><div class="t" style="left:0;width:258px;text-align:center;top:50px;font-size:14.500px;color:#666">从评价知识转向评价能力运用，更</div><div class="t" style="left:0;width:258px;text-align:center;top:69px;font-size:14.500px;color:#666">注重综合运用</div></div><div class="abs" style="left:85px;top:34px;width:64.500px;height:54px;background:#eff6ff;border:1px solid #bdd9f6;border-radius:2px"></div><div class="abs" style="left:108.75px;top:38.500px;width:17px;height:17px;border-radius:50%;background:#1f8df2"></div><div class="abs" style="left:113.75px;top:43.500px;width:7px;height:7.500px;border-radius:1.500px;border:1px solid #d9ecff;opacity:.9"></div><div class="abs" style="left:115.75px;top:46px;width:3.500px;height:1px;background:#d9ecff"></div><div class="abs" style="left:115.75px;top:48px;width:3.500px;height:1px;background:#d9ecff"></div><div class="abs" style="left:85px;top:57px;width:258px;height:120px;transform:scale(.25);transform-origin:0 0"><div class="t" style="left:0;width:258px;text-align:center;top:8px;font-size:19px;font-weight:bold;color:#333">题型结构优化</div><div class="t" style="left:0;width:258px;text-align:center;top:50px;font-size:14.500px;color:#666">新增新题型，强化综合能力考查，</div><div class="t" style="left:0;width:258px;text-align:center;top:69px;font-size:14.500px;color:#666">板块更分明</div></div><div class="abs" style="left:155.5px;top:34px;width:64.500px;height:54px;background:#eff6ff;border:1px solid #bdd9f6;border-radius:2px"></div><div class="abs" style="left:179.25px;top:38.500px;width:17px;height:17px;border-radius:50%;background:#1f8df2"></div><div class="abs" style="left:184.25px;top:43.500px;width:7px;height:7.500px;border-radius:1.500px;border:1px solid #d9ecff;opacity:.9"></div><div class="abs" style="left:186.25px;top:46px;width:3.500px;height:1px;background:#d9ecff"></div><div class="abs" style="left:186.25px;top:48px;width:3.500px;height:1px;background:#d9ecff"></div><div class="abs" style="left:155.5px;top:57px;width:258px;height:120px;transform:scale(.25);transform-origin:0 0"><div class="t" style="left:0;width:258px;text-align:center;top:8px;font-size:19px;font-weight:bold;color:#333">内容选材更新</div><div class="t" style="left:0;width:258px;text-align:center;top:50px;font-size:14.500px;color:#666">更贴近真实学习与工作情境，强调</div><div class="t" style="left:0;width:258px;text-align:center;top:69px;font-size:14.500px;color:#666">考试实用性</div></div><div class="abs" style="left:14px;top:97px;width:206px;height:20px;background:#dfe8f3;border:1px dashed #b5cfe9;border-radius:2px"></div><div class="abs" style="left:14px;top:97px;width:824px;height:80px;transform:scale(.25);transform-origin:0 0"><div class="t" style="left:0;width:824px;text-align:center;top:32px;font-size:15px;color:#555"><span style="color:#2f6fe0;font-weight:bold">核心导向：</span>从评知学，从评促教，完全聚焦语言能力素养，适应新时代人才培养需求。</div></div></div>
<div class="thumb" style="top:415px;height:132px;border-radius:2px"><div class="t" style="left:0;width:234px;text-align:center;top:48.500px;font-size:8.800px;font-weight:bold;color:#333;letter-spacing:-0.15px">第三章：教材展示与教学策略</div></div>
<div class="abs" style="left:56px;top:565.500px;width:238px;height:135px;border:2px solid #d4621a;border-radius:5px;background:#fff"></div>
<div class="abs" id="t22" style="left:59px;top:569px;width:232px;height:129px;overflow:hidden;background:#f7f7f7"><div class="abs" id="t22i" style="left:0;top:0;width:1314px;height:739px;transform:scale(0.17656);transform-origin:0 0">
  <div class="abs" style="left:0;top:0;width:1314px;height:739px;border-radius:55px;background:#f4f7fe"></div>
  
<svg  width="288" height="338" viewBox="0 0 288 338" style="left:0;top:0">
<defs><filter id="bl_t" x="-5%" y="-5%" width="110%" height="110%"><feGaussianBlur stdDeviation="3.2"/></filter>
<filter id="bl2_t"><feGaussianBlur stdDeviation="2.2"/></filter>
<clipPath id="bkc_t"><rect x="0" y="0" width="288" height="338"/></clipPath></defs>
<rect x="0" y="0" width="288" height="338" fill="#fff"/>
<g clip-path="url(#bkc_t)"><g transform="translate(-4,-4) scale(0.29674)">
 <g filter="url(#bl_t)">
  <!-- shadow -->
  <polygon points="100,35 140,20 940,60 940,1140 100,1165" fill="#e9e9ea"/>
  <!-- front cover -->
  <polygon points="140,25 930,65 930,1135 140,1160" fill="#eceae8"/>
  <polygon points="140,388 250,430 930,140 930,745 330,1040 140,975" fill="#2b5592"/>
  <polygon points="140,975 330,1040 590,1136 140,1160" fill="#a4623c"/>
  <polygon points="330,1040 930,745 930,1135 590,1136" fill="#cbb996"/>
  <!-- spine -->
  <polygon points="105,42 140,25 140,388 105,380" fill="#d3d1cf"/>
  <polygon points="105,380 140,388 140,975 105,962" fill="#23467b"/>
  <polygon points="105,962 140,975 140,1160 105,1150" fill="#87502f"/>
 </g>
 <g filter="url(#bl_t)" font-family="Liberation Sans, sans-serif">
  <rect x="258" y="110" width="42" height="44" fill="#2e5fb0"/>
  <rect x="316" y="122" width="150" height="7" fill="#7f94b8"/><rect x="316" y="136" width="150" height="6" fill="#9aa9c4"/>
  <text x="258" y="322" font-size="37" font-weight="bold" fill="#2a2f3a" textLength="250" lengthAdjust="spacingAndGlyphs">国际中文教育</text>
  <text x="510" y="322" font-size="37" font-weight="bold" fill="#3a4a66" opacity=".75" textLength="296" lengthAdjust="spacingAndGlyphs">中文水平等级标准</text>
  <text x="258" y="375" font-size="24" font-weight="bold" fill="#2a2f3a" textLength="120" lengthAdjust="spacingAndGlyphs">Chinese P</text>
  <text x="380" y="375" font-size="24" font-weight="bold" fill="#c9d3e6" opacity=".8" textLength="426" lengthAdjust="spacingAndGlyphs">roficiency Grading Standards for</text>
  <text x="258" y="410" font-size="24" font-weight="bold" fill="#2a2f3a" textLength="95" lengthAdjust="spacingAndGlyphs">Interna</text>
  <text x="355" y="410" font-size="24" font-weight="bold" fill="#c9d3e6" opacity=".8" textLength="450" lengthAdjust="spacingAndGlyphs">tional Chinese Language Education</text>
  <text x="256" y="534" font-size="64" font-weight="bold" fill="#fff" textLength="378" lengthAdjust="spacingAndGlyphs">语法学习手册</text>
  <text x="257" y="596" font-size="34" font-weight="bold" fill="#e6ebf5" textLength="384" lengthAdjust="spacingAndGlyphs">Grammar Learning Manual</text>
  <ellipse cx="290" cy="669" rx="32" ry="21" fill="#e9eef7"/><text x="268" y="679" font-size="24" font-weight="bold" fill="#2b5592">CTI</text>
  <rect x="332" y="655" width="166" height="10" fill="#c3cfe5"/><rect x="332" y="671" width="166" height="7" fill="#9fb2d4"/>
  <rect x="515" y="654" width="3" height="22" fill="#c3cfe5"/><rect x="530" y="655" width="20" height="20" fill="#b6c4de"/>
  <g fill="#a9badb"><rect x="258" y="766" width="42" height="18"/><rect x="320" y="766" width="66" height="18"/>
  <rect x="258" y="791" width="42" height="18"/><rect x="318" y="791" width="58" height="18"/><rect x="396" y="791" width="58" height="18"/><rect x="478" y="791" width="58" height="18"/><rect x="552" y="791" width="58" height="18"/></g>
  <circle cx="810" cy="797" r="58" fill="#a5613e"/>
  <text x="766" y="803" font-size="44" font-weight="bold" fill="#fff" font-family="Liberation Serif, serif">高等</text>
  <rect x="772" y="818" width="78" height="7" fill="#e3cdbd"/>
  <rect x="258" y="1060" width="40" height="42" fill="#2e5fb0"/><path d="M280 1062 L296 1080 L280 1098 Z" fill="#e33a6a"/>
  <rect x="310" y="1064" width="186" height="9" fill="#6f86ac"/><rect x="310" y="1082" width="186" height="6" fill="#9fb0cc"/>
  <!-- spine text -->
  <g fill="#fff" font-weight="bold" font-size="24">
   <rect x="113" y="120" width="20" height="270" fill="#4b5566" opacity=".85"/>
   <rect x="113" y="392" width="20" height="120" fill="#8fa3c8" opacity=".6"/>
   <rect x="112" y="572" width="22" height="180" fill="#e8edf6" opacity=".95"/>
   <rect x="112" y="800" width="24" height="70" fill="#a4623c"/><rect x="116" y="808" width="16" height="54" fill="#f0e1d6"/>
  </g>
 </g>
</g></g>
</svg>
  <div class="abs" style="left:0;top:0;width:1314px;height:739px;border-radius:55px;border:1.500px solid #bcdaf3"></div>
  <div class="abs" style="left:0;top:338px;width:1314px;height:355px;background:#fff"></div>
  <div class="abs" style="left:4px;top:347px;width:151.500px;height:41.500px;background:#8b166b"></div>
  <div class="abs" style="left:4px;top:384px;width:1308px;height:4.500px;background:#8b166b"></div>
  <div class="t" style="left:33.500px;top:357px;font-size:23.600px;color:#fff;font-weight:300;letter-spacing:-0.3px">内容简介</div>
  <div class="para j" style="width:1157px;left:62px;top:432.5px">《语法学习手册》严格依据教育部和国家语委联合发布的《国际中文教育中文水平等级标准》<span class="ql">“</span>附录A（规范性）语法等级大</div><div class="para j" style="left:20px;top:477.5px;width:1271px">纲<span class="qr">”</span>（以下简称<span class="ql">“</span>语法等级大纲<span class="qr">”</span>）进行编写，是面向中文学习者的应用型学习手册。本书遵循<span class="ql">“</span>以学习者为中心<span class="qr">”</span>的教育理念，倡导语</div><div class="para j" style="left:20px;top:522.5px;width:1271px">法自然习得。《语法学习手册》分初等、中等、高等三个分册，分别对应<span class="ql">“</span>语法等级大纲<span class="qr">”</span>初等、中等和高等的语法点。书中对<span class="ql">“</span>语法等</div><div class="para j" style="left:20px;top:566.5px;width:1271px">级大纲<span class="qr">”</span>的语法点进行了拆分或合并，围绕<span class="ql">“</span>基本语义及用法<span class="qr">”</span><span class="ql">“</span>典型例句和对话<span class="qr">”</span><span class="ql">“</span>补充例句<span class="qr">”</span><span class="ql">“</span>结构特点<span class="qr">”</span><span class="ql">“</span>小提示<span class="qr">”</span>等几个维度对</div><div class="para j" style="left:20px;top:611.5px;width:1271px">每个语法点进行详细说明。本书从教学实际出发，力求为国际中文语法学习与教学提供一定的参照与支持。本书为高等分册，对高等水平</div><div class="para" style="left:20px;top:656.5px">学习者的语法学习提供参考。</div>
  <!-- word icon -->
  <svg width="110" height="100" viewBox="1350 395 110 100" style="left:641px;top:51px">
    <path d="M1368 405 h67 l18 13.500 v68 h-85 Z" fill="#fff" stroke="#7d7d7d" stroke-width="2" stroke-linejoin="round"/>
    <path d="M1435 405 L1428 424.500 L1453 418.500 Z" fill="#f2f2f2" stroke="#a8a8a8" stroke-width="1.200" stroke-linejoin="round"/>
    <path d="M1435 405 L1453 418.500" stroke="#2a2a2a" stroke-width="2.200"/>
    <path d="M1426 451 h15 M1426 459 h15 M1426 467 h15 M1381 476 h60" stroke="#e6ecf6" stroke-width="2.500"/>
    <rect x="1357.500" y="422.500" width="62" height="47" fill="#1b6cf2"/>
    <rect x="1410" y="422.500" width="9.500" height="47" fill="#3d88ff"/>
    <rect x="1357.500" y="462" width="62" height="7.500" fill="#1560e6"/>
    <path d="M1367 433 L1373 450 L1381.500 435 L1390 450 L1396 433" fill="none" stroke="#fff" stroke-width="4" stroke-linejoin="miter"/>
  </svg>
  <div class="t" style="left:0;top:169.500px;width:1398px;text-align:center;font-size:36px;color:#111;letter-spacing:-2px">HSK7-9语法词</div>
  <div class="t" style="left:0;top:216.500px;width:1398px;text-align:center;font-size:36px;color:#111;letter-spacing:-2px">汇教案41-45刘芸琳.d</div></div></div>
<div class="thumb" style="top:719.500px;height:131.500px;background:#f1f5fc;border-radius:2px"><div class="abs" style="left:0;top:0;width:234px;height:131.500px;border:1px solid #c4dcf2;border-radius:10px"></div><div class="abs" style="left:31px;top:0;width:181px;height:131.500px;background:#fff"></div><div class="abs" style="left:36px;top:1.500px;width:171px;height:12px;background:#9b9b9b;border-radius:2px 6px 6px 2px"></div><div class="abs" style="left:0;top:0;width:936px;height:526px;transform:scale(.25);transform-origin:0 0;font-family:'Liberation Serif',serif"><div class="t" style="left:144px;width:684px;text-align:center;top:18px;font-size:19px;font-weight:bold;color:#f2f2f2;letter-spacing:5px;font-family:'Liberation Sans',sans-serif">七—九级语法点</div><div class="t" style="left:146px;top:81.0px;font-size:14.500px;color:#444">1. 疑问代词：谁</div><div class="t" style="left:400px;width:52px;text-align:right;top:81.0px;font-size:14.500px;color:#444">3</div><div class="t" style="left:524px;top:81.0px;font-size:14.500px;color:#444">29. 语气副词：不妨</div><div class="t" style="left:776px;width:52px;text-align:right;top:81.0px;font-size:14.500px;color:#444">40</div><div class="t" style="left:146px;top:110.8px;font-size:14.500px;color:#444">2. 疑问代词：何</div><div class="t" style="left:400px;width:52px;text-align:right;top:110.8px;font-size:14.500px;color:#444">4</div><div class="t" style="left:524px;top:110.8px;font-size:14.500px;color:#444">30. 语气副词：何必</div><div class="t" style="left:776px;width:52px;text-align:right;top:110.8px;font-size:14.500px;color:#444">42</div><div class="t" style="left:146px;top:140.7px;font-size:14.500px;color:#444">3. 指示代词（1）：彼</div><div class="t" style="left:400px;width:52px;text-align:right;top:140.7px;font-size:14.500px;color:#444">5</div><div class="t" style="left:524px;top:140.7px;font-size:14.500px;color:#444">31. 语气副词：是否</div><div class="t" style="left:776px;width:52px;text-align:right;top:140.7px;font-size:14.500px;color:#444">43</div><div class="t" style="left:146px;top:170.5px;font-size:14.500px;color:#444">4. 指示代词（2）：兹</div><div class="t" style="left:400px;width:52px;text-align:right;top:170.5px;font-size:14.500px;color:#444">6</div><div class="t" style="left:524px;top:170.5px;font-size:14.500px;color:#444">32. 语气副词：何尝</div><div class="t" style="left:776px;width:52px;text-align:right;top:170.5px;font-size:14.500px;color:#444">44</div><div class="t" style="left:146px;top:200.4px;font-size:14.500px;color:#444">5. 程度副词：尤为</div><div class="t" style="left:400px;width:52px;text-align:right;top:200.4px;font-size:14.500px;color:#444">7</div><div class="t" style="left:524px;top:200.4px;font-size:14.500px;color:#444">33. 语气副词：无非</div><div class="t" style="left:776px;width:52px;text-align:right;top:200.4px;font-size:14.500px;color:#444">46</div><div class="t" style="left:146px;top:230.2px;font-size:14.500px;color:#444">6. 程度副词：尤</div><div class="t" style="left:400px;width:52px;text-align:right;top:230.2px;font-size:14.500px;color:#444">9</div><div class="t" style="left:524px;top:230.2px;font-size:14.500px;color:#444">34. 语气副词：分明</div><div class="t" style="left:776px;width:52px;text-align:right;top:230.2px;font-size:14.500px;color:#444">47</div><div class="t" style="left:146px;top:260.0px;font-size:14.500px;color:#444">7. 程度副词：甚</div><div class="t" style="left:400px;width:52px;text-align:right;top:260.0px;font-size:14.500px;color:#444">10</div><div class="t" style="left:524px;top:260.0px;font-size:14.500px;color:#444">35. 语气副词：敢不敢（得很）</div><div class="t" style="left:776px;width:52px;text-align:right;top:260.0px;font-size:14.500px;color:#444">49</div><div class="t" style="left:146px;top:289.9px;font-size:14.500px;color:#444">8. 程度副词：颇</div><div class="t" style="left:400px;width:52px;text-align:right;top:289.9px;font-size:14.500px;color:#444">11</div><div class="t" style="left:524px;top:289.9px;font-size:14.500px;color:#444">36. 语气副词：明明</div><div class="t" style="left:776px;width:52px;text-align:right;top:289.9px;font-size:14.500px;color:#444">51</div><div class="t" style="left:146px;top:319.7px;font-size:14.500px;color:#444">9. 程度副词：何其</div><div class="t" style="left:400px;width:52px;text-align:right;top:319.7px;font-size:14.500px;color:#444">12</div><div class="t" style="left:524px;top:319.7px;font-size:14.500px;color:#444">37. 语气副词：万</div><div class="t" style="left:776px;width:52px;text-align:right;top:319.7px;font-size:14.500px;color:#444">52</div><div class="t" style="left:146px;top:349.6px;font-size:14.500px;color:#444">10. 程度副词：大为</div><div class="t" style="left:400px;width:52px;text-align:right;top:349.6px;font-size:14.500px;color:#444">14</div><div class="t" style="left:524px;top:349.6px;font-size:14.500px;color:#444">38. 语气副词：偏偏</div><div class="t" style="left:776px;width:52px;text-align:right;top:349.6px;font-size:14.500px;color:#444">54</div><div class="t" style="left:146px;top:379.4px;font-size:14.500px;color:#444">11. 程度副词：尤其</div><div class="t" style="left:400px;width:52px;text-align:right;top:379.4px;font-size:14.500px;color:#444">15</div><div class="t" style="left:524px;top:379.4px;font-size:14.500px;color:#444">39. 语气副词：索性</div><div class="t" style="left:776px;width:52px;text-align:right;top:379.4px;font-size:14.500px;color:#444">55</div><div class="t" style="left:146px;top:409.2px;font-size:14.500px;color:#444">12. 范围、协同副词：凡</div><div class="t" style="left:400px;width:52px;text-align:right;top:409.2px;font-size:14.500px;color:#444">17</div><div class="t" style="left:524px;top:409.2px;font-size:14.500px;color:#444">40. 语气副词：万万</div><div class="t" style="left:776px;width:52px;text-align:right;top:409.2px;font-size:14.500px;color:#444">56</div><div class="t" style="left:146px;top:439.1px;font-size:14.500px;color:#444">13. 范围、协同副词：皆</div><div class="t" style="left:400px;width:52px;text-align:right;top:439.1px;font-size:14.500px;color:#444">18</div><div class="t" style="left:524px;top:439.1px;font-size:14.500px;color:#444">41. 语气副词：未免</div><div class="t" style="left:776px;width:52px;text-align:right;top:439.1px;font-size:14.500px;color:#444">58</div><div class="t" style="left:146px;top:468.9px;font-size:14.500px;color:#444">14. 范围、协同副词：统统</div><div class="t" style="left:400px;width:52px;text-align:right;top:468.9px;font-size:14.500px;color:#444">19</div><div class="t" style="left:524px;top:468.9px;font-size:14.500px;color:#444">42. 语气副词：无不</div><div class="t" style="left:776px;width:52px;text-align:right;top:468.9px;font-size:14.500px;color:#444">60</div><div class="t" style="left:146px;top:498.8px;font-size:14.500px;color:#444">15. 范围、协同副词：唯独</div><div class="t" style="left:400px;width:52px;text-align:right;top:498.8px;font-size:14.500px;color:#444">21</div><div class="t" style="left:524px;top:498.8px;font-size:14.500px;color:#444">43. 语气副词：不禁</div><div class="t" style="left:776px;width:52px;text-align:right;top:498.8px;font-size:14.500px;color:#444">61</div></div></div>
<div class="thumb" style="top:872px;height:82px;background:#f1f5fc;border-radius:2px 2px 0 0"><div class="abs" style="left:0;top:0;width:234px;height:140px;border:1px solid #c4dcf2;border-radius:10px"></div><div class="abs" style="left:34px;top:0;width:160px;height:82px;background:#fff"></div><div class="abs" style="left:175px;top:0;width:14px;height:9.500px;background:repeating-linear-gradient(90deg,#666 0 1.200px,#ccc 1.200px 2.400px);opacity:.85"></div><div class="abs" style="left:40px;top:10.500px;width:134px;height:1px;background:#999"></div><div class="abs" style="left:40px;top:43px;width:149px;height:0;border-top:1px dashed #aaa"></div><div class="abs" style="left:40px;top:51px;width:149px;height:0;border-top:1px dashed #aaa"></div><div class="abs" style="left:40px;top:73px;width:149px;height:0;border-top:1px dashed #aaa"></div><div class="abs" style="left:86px;top:43px;width:1px;height:39px;background:#ccc"></div><div class="abs" style="left:0;top:0;width:936px;height:328px;transform:scale(.25);transform-origin:0 0;font-family:'Liberation Serif',serif"><div class="t" style="left:160px;top:8px;font-size:26px;color:#222;font-weight:bold;font-family:'Liberation Sans',sans-serif;">2</div><div class="t" style="left:186px;top:14px;font-size:16px;color:#444;">疑问代词：何</div><div class="t" style="left:596px;top:16px;font-size:13px;color:#555;">【七—九 002】</div><div class="t" style="left:168px;top:56px;font-size:13px;color:#777;">◎</div><div class="t" style="left:186px;top:54px;font-size:15px;color:#222;font-weight:bold;">基本语义及用法</div><div class="t" style="left:196px;top:94px;font-size:14px;color:#555;">疑问代词，相当于“什么、哪里、为什么”。一般用于书面语。</div><div class="t" style="left:168px;top:138px;font-size:13px;color:#777;">◎</div><div class="t" style="left:186px;top:136px;font-size:15px;color:#222;font-weight:bold;">典型例句和对话</div><div class="t" style="left:228px;top:180px;font-size:12.5px;color:#555;">例句</div><div class="t" style="left:520px;top:180px;font-size:12.5px;color:#555;">结构框架</div><div class="t" style="left:162px;top:212px;font-size:13.5px;color:#444;">①此行何时启程？</div><div class="t" style="left:354px;top:212px;font-size:13px;color:#555;">（受邀赴上，询问出发时间）</div><div class="t" style="left:358px;top:240px;font-size:13px;color:#444;">A：我们何时出发？</div><div class="t" style="left:358px;top:264px;font-size:13px;color:#444;">B：待知上试是下去。</div><div class="t" style="left:162px;top:300px;font-size:13.5px;color:#444;">②我们人生从何而来。</div><div class="t" style="left:354px;top:300px;font-size:13px;color:#555;">（受邀前，讨论哲学问题）</div></div></div>
<div class="abs" style="left:82px;top:532px;width:30.500px;height:30.500px;border-radius:50%;background:#fdfdfd;box-shadow:0 1px 3px rgba(0,0,0,.25)"></div>
<svg width="20" height="20" style="left:88px;top:537.500px"><path d="M5.500 3.500 L15.500 10 L5.500 16.500 Z" fill="#ee8a45"/></svg>
<div class="abs" style="left:186.500px;top:532px;width:31px;height:31px;border-radius:50%;background:#e9965f;box-shadow:0 1px 3px rgba(0,0,0,.2)"></div>
<svg width="31" height="31" style="left:186.500px;top:532px"><path d="M9 11.500 l2.500 -2.500 l11 11 l-2.500 2.500 Z M11.500 14 l2.500 -2.500" fill="none" stroke="#f8d9c4" stroke-width="1.300"/><path d="M20.500 7.500 v4 M18.500 9.500 h4 M10 19.500 v4 M8 21.500 h4" stroke="#f8d9c4" stroke-width="1.200"/></svg>
<div class="abs" style="left:236.500px;top:532px;width:31px;height:31px;border-radius:50%;background:#e8843c;box-shadow:0 1px 3px rgba(0,0,0,.25)"></div>
<svg width="31" height="31" style="left:236.500px;top:532px"><path d="M15.500 7.500 v16 M7.500 15.500 h16" stroke="#fff" stroke-width="2.400"/></svg>
<div class="abs" style="left:318px;top:661px;width:7px;height:95px;border-radius:3.500px;background:#cfcfcf"></div>
<svg width="20" height="20" style="left:155px;top:970px"><path d="M10 2 v16 M2 10 h16" stroke="#333" stroke-width="1.800"/></svg>


<!-- canvas -->
<div class="abs" style="left:332px;top:190px;width:1px;height:860px;background:#d2d2d2"></div>
<div class="abs" style="left:1898px;top:190px;width:1px;height:826px;background:#d2d2d2"></div>
<div id="slide" class="abs">
  <div class="abs" style="left:0;top:0;width:1314px;height:739px;border-radius:55px;background:#f4f7fe"></div>
  
<svg id="bk" width="288" height="338" viewBox="0 0 288 338" style="left:0;top:0">
<defs><filter id="bl" x="-5%" y="-5%" width="110%" height="110%"><feGaussianBlur stdDeviation="3.2"/></filter>
<filter id="bl2"><feGaussianBlur stdDeviation="2.2"/></filter>
<clipPath id="bkc"><rect x="0" y="0" width="288" height="338"/></clipPath></defs>
<rect x="0" y="0" width="288" height="338" fill="#fff"/>
<g clip-path="url(#bkc)"><g transform="translate(-4,-4) scale(0.29674)">
 <g filter="url(#bl)">
  <!-- shadow -->
  <polygon points="100,35 140,20 940,60 940,1140 100,1165" fill="#e9e9ea"/>
  <!-- front cover -->
  <polygon points="140,25 930,65 930,1135 140,1160" fill="#eceae8"/>
  <polygon points="140,388 250,430 930,140 930,745 330,1040 140,975" fill="#2b5592"/>
  <polygon points="140,975 330,1040 590,1136 140,1160" fill="#a4623c"/>
  <polygon points="330,1040 930,745 930,1135 590,1136" fill="#cbb996"/>
  <!-- spine -->
  <polygon points="105,42 140,25 140,388 105,380" fill="#d3d1cf"/>
  <polygon points="105,380 140,388 140,975 105,962" fill="#23467b"/>
  <polygon points="105,962 140,975 140,1160 105,1150" fill="#87502f"/>
 </g>
 <g filter="url(#bl)" font-family="Liberation Sans, sans-serif">
  <rect x="258" y="110" width="42" height="44" fill="#2e5fb0"/>
  <rect x="316" y="122" width="150" height="7" fill="#7f94b8"/><rect x="316" y="136" width="150" height="6" fill="#9aa9c4"/>
  <text x="258" y="322" font-size="37" font-weight="bold" fill="#2a2f3a" textLength="250" lengthAdjust="spacingAndGlyphs">国际中文教育</text>
  <text x="510" y="322" font-size="37" font-weight="bold" fill="#3a4a66" opacity=".75" textLength="296" lengthAdjust="spacingAndGlyphs">中文水平等级标准</text>
  <text x="258" y="375" font-size="24" font-weight="bold" fill="#2a2f3a" textLength="120" lengthAdjust="spacingAndGlyphs">Chinese P</text>
  <text x="380" y="375" font-size="24" font-weight="bold" fill="#c9d3e6" opacity=".8" textLength="426" lengthAdjust="spacingAndGlyphs">roficiency Grading Standards for</text>
  <text x="258" y="410" font-size="24" font-weight="bold" fill="#2a2f3a" textLength="95" lengthAdjust="spacingAndGlyphs">Interna</text>
  <text x="355" y="410" font-size="24" font-weight="bold" fill="#c9d3e6" opacity=".8" textLength="450" lengthAdjust="spacingAndGlyphs">tional Chinese Language Education</text>
  <text x="256" y="534" font-size="64" font-weight="bold" fill="#fff" textLength="378" lengthAdjust="spacingAndGlyphs">语法学习手册</text>
  <text x="257" y="596" font-size="34" font-weight="bold" fill="#e6ebf5" textLength="384" lengthAdjust="spacingAndGlyphs">Grammar Learning Manual</text>
  <ellipse cx="290" cy="669" rx="32" ry="21" fill="#e9eef7"/><text x="268" y="679" font-size="24" font-weight="bold" fill="#2b5592">CTI</text>
  <rect x="332" y="655" width="166" height="10" fill="#c3cfe5"/><rect x="332" y="671" width="166" height="7" fill="#9fb2d4"/>
  <rect x="515" y="654" width="3" height="22" fill="#c3cfe5"/><rect x="530" y="655" width="20" height="20" fill="#b6c4de"/>
  <g fill="#a9badb"><rect x="258" y="766" width="42" height="18"/><rect x="320" y="766" width="66" height="18"/>
  <rect x="258" y="791" width="42" height="18"/><rect x="318" y="791" width="58" height="18"/><rect x="396" y="791" width="58" height="18"/><rect x="478" y="791" width="58" height="18"/><rect x="552" y="791" width="58" height="18"/></g>
  <circle cx="810" cy="797" r="58" fill="#a5613e"/>
  <text x="766" y="803" font-size="44" font-weight="bold" fill="#fff" font-family="Liberation Serif, serif">高等</text>
  <rect x="772" y="818" width="78" height="7" fill="#e3cdbd"/>
  <rect x="258" y="1060" width="40" height="42" fill="#2e5fb0"/><path d="M280 1062 L296 1080 L280 1098 Z" fill="#e33a6a"/>
  <rect x="310" y="1064" width="186" height="9" fill="#6f86ac"/><rect x="310" y="1082" width="186" height="6" fill="#9fb0cc"/>
  <!-- spine text -->
  <g fill="#fff" font-weight="bold" font-size="24">
   <rect x="113" y="120" width="20" height="270" fill="#4b5566" opacity=".85"/>
   <rect x="113" y="392" width="20" height="120" fill="#8fa3c8" opacity=".6"/>
   <rect x="112" y="572" width="22" height="180" fill="#e8edf6" opacity=".95"/>
   <rect x="112" y="800" width="24" height="70" fill="#a4623c"/><rect x="116" y="808" width="16" height="54" fill="#f0e1d6"/>
  </g>
 </g>
</g></g>
</svg>
  <div class="abs" style="left:0;top:0;width:1314px;height:739px;border-radius:55px;border:1.500px solid #bcdaf3"></div>
  <div class="abs" style="left:0;top:338px;width:1314px;height:355px;background:#fff"></div>
  <div class="abs" style="left:4px;top:347px;width:151.500px;height:41.500px;background:#8b166b"></div>
  <div class="abs" style="left:4px;top:384px;width:1308px;height:4.500px;background:#8b166b"></div>
  <div class="t" style="left:33.500px;top:357px;font-size:23.600px;color:#fff;font-weight:300;letter-spacing:-0.3px">内容简介</div>
  <div class="para j" style="width:1157px;left:62px;top:432.5px">《语法学习手册》严格依据教育部和国家语委联合发布的《国际中文教育中文水平等级标准》<span class="ql">“</span>附录A（规范性）语法等级大</div><div class="para j" style="left:20px;top:477.5px;width:1271px">纲<span class="qr">”</span>（以下简称<span class="ql">“</span>语法等级大纲<span class="qr">”</span>）进行编写，是面向中文学习者的应用型学习手册。本书遵循<span class="ql">“</span>以学习者为中心<span class="qr">”</span>的教育理念，倡导语</div><div class="para j" style="left:20px;top:522.5px;width:1271px">法自然习得。《语法学习手册》分初等、中等、高等三个分册，分别对应<span class="ql">“</span>语法等级大纲<span class="qr">”</span>初等、中等和高等的语法点。书中对<span class="ql">“</span>语法等</div><div class="para j" style="left:20px;top:566.5px;width:1271px">级大纲<span class="qr">”</span>的语法点进行了拆分或合并，围绕<span class="ql">“</span>基本语义及用法<span class="qr">”</span><span class="ql">“</span>典型例句和对话<span class="qr">”</span><span class="ql">“</span>补充例句<span class="qr">”</span><span class="ql">“</span>结构特点<span class="qr">”</span><span class="ql">“</span>小提示<span class="qr">”</span>等几个维度对</div><div class="para j" style="left:20px;top:611.5px;width:1271px">每个语法点进行详细说明。本书从教学实际出发，力求为国际中文语法学习与教学提供一定的参照与支持。本书为高等分册，对高等水平</div><div class="para" style="left:20px;top:656.5px">学习者的语法学习提供参考。</div>
  <!-- word icon -->
  <svg width="110" height="100" viewBox="1350 395 110 100" style="left:641px;top:51px">
    <path d="M1368 405 h67 l18 13.500 v68 h-85 Z" fill="#fff" stroke="#7d7d7d" stroke-width="2" stroke-linejoin="round"/>
    <path d="M1435 405 L1428 424.500 L1453 418.500 Z" fill="#f2f2f2" stroke="#a8a8a8" stroke-width="1.200" stroke-linejoin="round"/>
    <path d="M1435 405 L1453 418.500" stroke="#2a2a2a" stroke-width="2.200"/>
    <path d="M1426 451 h15 M1426 459 h15 M1426 467 h15 M1381 476 h60" stroke="#e6ecf6" stroke-width="2.500"/>
    <rect x="1357.500" y="422.500" width="62" height="47" fill="#1b6cf2"/>
    <rect x="1410" y="422.500" width="9.500" height="47" fill="#3d88ff"/>
    <rect x="1357.500" y="462" width="62" height="7.500" fill="#1560e6"/>
    <path d="M1367 433 L1373 450 L1381.500 435 L1390 450 L1396 433" fill="none" stroke="#fff" stroke-width="4" stroke-linejoin="miter"/>
  </svg>
  <div class="t" style="left:0;top:169.500px;width:1398px;text-align:center;font-size:36px;color:#111;letter-spacing:-2px">HSK7-9语法词</div>
  <div class="t" style="left:0;top:216.500px;width:1398px;text-align:center;font-size:36px;color:#111;letter-spacing:-2px">汇教案41-45刘芸琳.d</div>
</div>


<!-- sidebar -->
<svg width="1970" height="1047" viewBox="0 0 1970 1047" style="left:0;top:0"><path d="M1925.5 220.500 h17" stroke="#888" stroke-width="1.300"/><path d="M1924 258 h4 M1933 258 h11 M1924 266.500 h12 M1942 266.500 h2" stroke="#444" stroke-width="1.300"/><circle cx="1930.5" cy="258" r="2.600" fill="none" stroke="#444" stroke-width="1.300"/><rect x="1936" y="263" width="5.500" height="7" rx="2.700" fill="none" stroke="#444" stroke-width="1.300"/><path d="M1935 304 l2.800 6 l6.500 0.800 l-4.800 4.400 l1.300 6.500 l-5.800 -3.200 l-2.500 1.400 M1935 304 l-2.800 6 l-6.500 0.800 l3 2.800 M1925 316 h6 M1926.5 319.500 h6" fill="none" stroke="#444" stroke-width="1.300" stroke-linejoin="round"/><path d="M1932 365 h-6 a1.500 1.500 0 0 1 -1.500 -1.500 v-7 a1.500 1.500 0 0 1 1.500 -1.500 h10 a1.500 1.500 0 0 1 1.500 1.500 v2.500" fill="none" stroke="#444" stroke-width="1.300"/><rect x="1932" y="360" width="12" height="10" rx="1.500" fill="none" stroke="#444" stroke-width="1.300"/><path d="M1925 368 a4 4 0 0 0 4 4 h1.500 M1928.5 369.500 l2.200 2.500 l-2.200 2.500" fill="none" stroke="#444" stroke-width="1.200"/><path d="M1927.5 410.500 l3 -3 l12.500 12.500 l-3 3 Z M1930 413 l3 -3" fill="none" stroke="#444" stroke-width="1.300" stroke-linejoin="round"/><path d="M1940.5 406 l1 2 l2 1 l-2 1 l-1 2 l-1 -2 l-2 -1 l2 -1 Z M1927 417.500 l1 2 l2 1 l-2 1 l-1 2 l-1 -2 l-2 -1 l2 -1 Z" fill="none" stroke="#444" stroke-width="1.100" stroke-linejoin="round"/><path d="M1930 459.500 a4 3 0 0 0 8 0 l5.500 2.500 l-2 5 l-3 -1 v3 M1930 459.500 l-5.500 2.500 l2 5 l3 -1 v10 h5" fill="none" stroke="#444" stroke-width="1.300" stroke-linejoin="round"/><path d="M1939 469.500 l1.300 2.800 l3 0.400 l-2.200 2 l0.600 3 l-2.700 -1.500 l-2.700 1.500 l0.600 -3 l-2.200 -2 l3 -0.400 Z" fill="none" stroke="#444" stroke-width="1.100" stroke-linejoin="round"/><path d="M1943 519 v-6 a2 2 0 0 0 -2 -2 h-14 a2 2 0 0 0 -2 2 v11 a2 2 0 0 0 2 2 h4" fill="none" stroke="#444" stroke-width="1.300"/><path d="M1928 519 a2.500 2.500 0 1 1 3 -3" fill="none" stroke="#444" stroke-width="1.200"/><path d="M1935 528 c-2 -5 0 -9 4 -11 c1 4 0 9 -4 11 Z M1937 528 c1 -3 3 -5 7 -5.500 c0 3 -3 5.500 -7 5.500 Z" fill="none" stroke="#444" stroke-width="1.200" stroke-linejoin="round"/><path d="M1935 577 l-2 -1.500 l-8 2 v-15 l8 -2 l8 3 v8" fill="none" stroke="#444" stroke-width="1.300" stroke-linejoin="round"/><path d="M1933 560.500 v15" stroke="#444" stroke-width="1.200"/><circle cx="1939" cy="574.500" r="3.300" fill="none" stroke="#444" stroke-width="1.300"/><path d="M1941.5 577 l2.500 2.500" stroke="#444" stroke-width="1.300"/><circle cx="1934" cy="621" r="9" fill="none" stroke="#444" stroke-width="1.300"/><path d="M1931 618.500 a3 3 0 1 1 4.500 2.600 c-1 0.600 -1.500 1.200 -1.500 2.400" fill="none" stroke="#444" stroke-width="1.300"/><circle cx="1934" cy="626.200" r="0.900" fill="#444"/><path d="M1925.5 665 h17 a1 1 0 0 1 1 1 v10.500 a1 1 0 0 1 -1 1 h-11 l-4 3.500 v-3.500 h-2 a1 1 0 0 1 -1 -1 v-10.500 a1 1 0 0 1 1 -1 Z" fill="none" stroke="#444" stroke-width="1.400" stroke-linejoin="round"/><circle cx="1927" cy="724" r="1.900" fill="none" stroke="#444" stroke-width="1.200"/><circle cx="1934" cy="724" r="1.900" fill="none" stroke="#444" stroke-width="1.200"/><circle cx="1941" cy="724" r="1.900" fill="none" stroke="#444" stroke-width="1.200"/><path d="M1883.800 203 L1887.300 197.500 L1890.800 203 Z" fill="#777"/><rect x="1882" y="630" width="9.500" height="55" rx="4.700" fill="#cdcdcd"/><path d="M1884.300 915.500 L1887.300 920.500 L1890.300 915.500 Z" fill="#666"/><path d="M1884.300 936 L1887.300 932 L1890.300 936 Z M1884.300 941.500 L1887.300 937.500 L1890.300 941.500 Z" fill="#666"/><path d="M1884.300 954 L1887.300 958 L1890.300 954 Z M1884.300 959.500 L1887.300 963.500 L1890.300 959.500 Z" fill="#666"/><path d="M1884.300 987.500 L1887.300 982.500 L1890.300 987.500 Z" fill="#888"/><path d="M1884.300 1003.500 L1887.300 1008.500 L1890.300 1003.500 Z" fill="#888"/></svg>
<!-- notes/status -->
<div class="abs" style="left:334px;top:974px;width:1564px;height:1px;background:#cfcfcf"></div>
<div class="t" style="left:345.500px;top:990px;font-size:15.350px;color:#2e2e2e;letter-spacing:0.37px">针对改革后的HSK考试，我们提出以下几点教学策略建议。首先，采用任务型教学法，设计更多贴近真实场景的语言任务；其次，教学要以能力为导向，注重培养学生的综合语言运用能力；再次，要重视过程性评价，关注学</div>
<div class="abs" style="left:334px;top:1006px;width:1564px;height:10px;overflow:hidden"><div class="t" style="left:12px;top:6px;font-size:15.350px;color:#2e2e2e;letter-spacing:0.37px">生的学习过程和进步情况，而不仅仅是最终成绩；最后，要充分利用现代教育技术，如在线学习平台、多媒体资源等，提高教学效率。</div></div>
<div class="abs" style="left:0;top:1015.500px;width:1970px;height:32px;background:#d4d4d4"></div>
<div class="t" style="left:16px;top:1024px;font-size:15.500px;color:#2a2a2a">幻灯片 22 / 33</div>
<div class="t" style="left:172px;top:1024px;font-size:15.500px;color:#2a2a2a;letter-spacing:-0.3px">默认主题</div>
<div class="t" style="left:295px;top:1024px;font-size:15.500px;color:#2a2a2a">校对</div>
<div class="t" style="left:1107px;top:1024px;font-size:15.500px;color:#2a2a2a;letter-spacing:-0.3px">智能美化</div>
<div class="t" style="left:1245.500px;top:1024px;font-size:15.500px;color:#2a2a2a">备注</div>
<div class="t" style="left:1341px;top:1024px;font-size:15.500px;color:#2a2a2a">批注</div>
<div class="t" style="left:1664px;top:1025px;font-size:15px;color:#2a2a2a">80%</div>
<div class="abs" style="left:1402px;top:1017px;width:28px;height:30px;background:#c6c6c6;border-radius:3px"></div>
<div class="abs" style="left:1537.500px;top:1020.500px;width:25.500px;height:22.500px;background:#d9682a;border-radius:4px"></div><svg width="1970" height="1047" viewBox="0 0 1970 1047" style="left:0;top:0"><rect x="129" y="1022" width="1" height="20" fill="#bdbdbd"/><rect x="251.500" y="1022" width="1" height="20" fill="#bdbdbd"/><rect x="1202" y="1022" width="1" height="20" fill="#bdbdbd"/><rect x="1389.500" y="1022" width="1" height="20" fill="#bdbdbd"/><rect x="1597.500" y="1022" width="1" height="20" fill="#bdbdbd"/><path d="M152.500 1024 a4 3 0 0 0 8 0 l5 2.500 l-2 4.500 l-2.500 -1 v2.500 M152.500 1024 l-5 2.500 l2 4.500 l2.500 -1 v9.500 h4" fill="none" stroke="#3a3a3a" stroke-width="1.300" stroke-linejoin="round"/><circle cx="161.500" cy="1037" r="3" fill="none" stroke="#3a3a3a" stroke-width="1.200"/><path d="M287 1029 v-5 a1 1 0 0 0 -1 -1 h-12 a1 1 0 0 0 -1 1 v16 a1 1 0 0 0 1 1 h5 M276 1028 l2 2 l4 -4" fill="none" stroke="#3a3a3a" stroke-width="1.300"/><circle cx="284" cy="1036" r="3.800" fill="none" stroke="#3a3a3a" stroke-width="1.300"/><path d="M287 1039 l2.500 2.500" stroke="#3a3a3a" stroke-width="1.300"/><path d="M1092 1023.500 l6.500 3 v4 M1092 1023.500 l-6.500 3 v9 l6.500 3.500 l6.500 -3.500 M1085.500 1026.500 l6.500 3.500 l6.500 -3.500" fill="none" stroke="#3a3a3a" stroke-width="1.200" stroke-linejoin="round"/><path d="M1176.5 1030.75 L1179 1033.25 L1181.5 1030.75" stroke="#3a3a3a" stroke-width="1.5" fill="none" stroke-linecap="round" stroke-linejoin="round"/><path d="M1223 1026 h14 M1223 1032 h14 M1223 1038 h14" stroke="#3a3a3a" stroke-width="1.400"/><path d="M1283.0 1030.75 L1285.5 1033.25 L1288.0 1030.75" stroke="#3a3a3a" stroke-width="1.5" fill="none" stroke-linecap="round" stroke-linejoin="round"/><path d="M1317.500 1025 h15 v11 h-9 l-3.500 3 v-3 h-2.500 Z M1329 1037 v5 M1326.500 1039.500 h5" fill="none" stroke="#3a3a3a" stroke-width="1.300" stroke-linejoin="round"/><rect x="1408" y="1025" width="16" height="14" rx="1.500" fill="none" stroke="#3a3a3a" stroke-width="1.300"/><path d="M1413 1025 v14" stroke="#3a3a3a" stroke-width="1.300"/><rect x="1449" y="1025" width="6" height="5.500" fill="none" stroke="#3a3a3a" stroke-width="1.200"/><rect x="1458.500" y="1025" width="6" height="5.500" fill="none" stroke="#3a3a3a" stroke-width="1.200"/><rect x="1449" y="1033.500" width="6" height="5.500" fill="none" stroke="#3a3a3a" stroke-width="1.200"/><rect x="1458.500" y="1033.500" width="6" height="5.500" fill="none" stroke="#3a3a3a" stroke-width="1.200"/><path d="M1499 1027 c-2 -2 -5 -2 -8 -1 v12 c3 -1 6 -1 8 1 c2 -2 5 -2 8 -1 v-12 c-3 -1 -6 -1 -8 1 Z M1499 1027 v12" fill="none" stroke="#3a3a3a" stroke-width="1.300" stroke-linejoin="round"/><path d="M1546.500 1027 L1555.500 1032 L1546.500 1037 Z" fill="#f3d5c0"/><path d="M1575.0 1030.75 L1577.5 1033.25 L1580.0 1030.75" stroke="#3a3a3a" stroke-width="1.5" fill="none" stroke-linecap="round" stroke-linejoin="round"/><path d="M1617 1028 v-3 h3.500 M1626.500 1025 h3.500 v3 M1630 1036 v3 h-3.500 M1620.500 1039 h-3.500 v-3" fill="none" stroke="#3a3a3a" stroke-width="1.300"/><rect x="1620" y="1028.500" width="7" height="7" rx="1" fill="none" stroke="#3a3a3a" stroke-width="1.200"/><path d="M1715.0 1030.75 L1717.5 1033.25 L1720.0 1030.75" stroke="#3a3a3a" stroke-width="1.5" fill="none" stroke-linecap="round" stroke-linejoin="round"/><path d="M1745 1032 h16" stroke="#3a3a3a" stroke-width="2"/><path d="M1778.500 1032 h50" stroke="#2f5fc0" stroke-width="2"/><path d="M1833 1032 h80" stroke="#b5b5b5" stroke-width="1.500"/><circle cx="1831" cy="1032" r="3.200" fill="#e8e8e8" stroke="#9a9a9a" stroke-width="1"/><path d="M1932 1032 h14 M1939 1025 v14" stroke="#3a3a3a" stroke-width="2"/></svg>

</div>


<!-- overlays -->
<div class="abs" style="left:2424px;top:132px;width:132px;height:132px;background:#1c1c1d"></div>
<svg width="132" height="132" viewBox="2424 132 132 132" style="left:2424px;top:132px"><circle cx="2483.500" cy="190.500" r="25.500" fill="none" stroke="#fff" stroke-width="7"/><path d="M2483.500 180 v21 M2473 190.500 h21" stroke="#fff" stroke-width="6"/><path d="M2504 211 L2515 222" stroke="#fff" stroke-width="10" stroke-linecap="round"/></svg>
<div class="abs" style="left:2484px;top:539px;width:90px;height:234px;background:#1a1a1a;border-radius:40px 0 0 40px"></div>
<svg width="40" height="50" viewBox="2500 630 40 50" style="left:2500px;top:630px"><path d="M2507 656 L2529.500 637.500 L2529.500 674 Z" fill="#fff"/></svg>
<div class="abs" style="left:81px;top:516px;width:17px;height:17px;border-radius:50%;background:#2dc653"></div>
<div class="abs" style="left:102px;top:222px;width:270px;height:96px;border-radius:9px;background:rgba(34,34,34,.715)"></div>
<svg width="100" height="70" viewBox="125 235 100 70" style="left:125px;top:235px"><g fill="#fff"><circle cx="182" cy="266" r="22.500"/><circle cx="153.500" cy="267" r="12.500"/><circle cx="147" cy="284" r="15"/><circle cx="198" cy="282" r="16.500"/><rect x="147" y="270" width="51" height="29" /></g><circle cx="174" cy="272.800" r="22.500" fill="none" stroke="#ff3b30" stroke-opacity=".18" stroke-width="2"/><circle cx="174" cy="272.800" r="12" fill="#ff3b30"/></svg>
<div class="t" style="left:235px;top:252px;font-size:35px;color:#fff;letter-spacing:-0.5px;-webkit-text-stroke:0.4px #fff">录制中</div>
<div class="abs" style="left:177px;top:828px;width:135px;height:135px;border-radius:50%;background:rgba(21,21,21,.68)"></div>
<svg width="135" height="135" viewBox="177 828 135 135" style="left:177px;top:828px"><path d="M242 908.500 h-21 a8 8 0 0 1 -8 -8 v-25 a8 8 0 0 1 8 -8 h40 a8 8 0 0 1 8 8 v26" fill="none" stroke="#c9c9c9" stroke-width="4.500"/><circle cx="231" cy="885.500" r="3.200" fill="#c9c9c9"/><path d="M240 885.500 h15" stroke="#c9c9c9" stroke-width="6" stroke-linecap="round"/><circle cx="227.500" cy="898.500" r="3.200" fill="#c9c9c9"/><path d="M237 898.500 h8" stroke="#c9c9c9" stroke-width="6" stroke-linecap="round"/><rect x="241" y="907" width="37" height="22" rx="11" fill="#1fc05a"/><circle cx="266.300" cy="917.500" r="12" fill="#fff"/></svg>
<div class="abs" style="left:0;top:1113px;width:2556px;height:66px;background:rgba(38,38,38,.72)"></div>
<div class="abs" style="left:0;top:1113px;width:66px;height:66px;background:#ff8a1a"></div>
<svg width="66" height="66" viewBox="0 1113 66 66" style="left:0;top:1113px"><circle cx="33" cy="1132.800" r="10" fill="#fff"/><path d="M10 1169 c0 -11 5 -19 14 -22.500 l9 7 l9 -7 c9 3.500 14 11.500 14 22.500 Z" fill="#fff"/></svg>
<svg width="50" height="50" viewBox="80 1120 50 50" style="left:80px;top:1120px"><rect x="94.800" y="1125.300" width="19.800" height="30.500" rx="9.900" fill="#fff"/><path d="M88.300 1146 a16.500 16 0 0 0 33 0" fill="none" stroke="#fff" stroke-width="3.200"/><path d="M104.800 1161 v6" stroke="#fff" stroke-width="3.200"/></svg>
<div class="t" style="left:136px;top:1131.500px;font-size:32.500px;color:#fff;letter-spacing:0.9px;-webkit-text-stroke:0.5px #fff">Hanyuan的屏幕共享</div>

</body>
</html>
